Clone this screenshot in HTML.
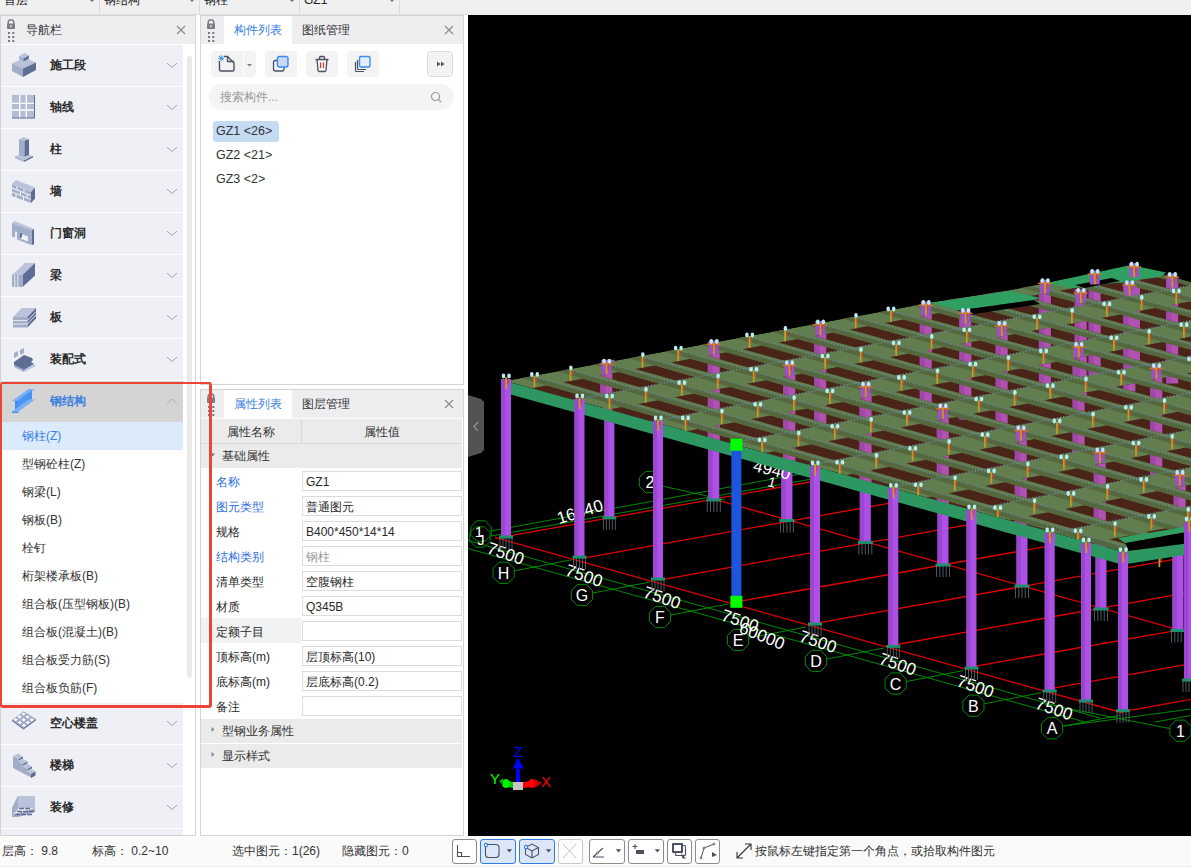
<!DOCTYPE html><html><head><meta charset="utf-8"><style>
*{box-sizing:border-box;margin:0;padding:0}
html,body{width:1191px;height:867px;overflow:hidden;background:#f0f0f0;font-family:"Liberation Sans",sans-serif;font-size:12px;color:#333}
div,span,svg{position:absolute}
.t{white-space:nowrap;line-height:14px}
.b{font-weight:bold}
</style></head><body>
<div style="left:0px;top:0px;width:468px;height:15px;background:#f0f0f0"></div>
<div style="left:99px;top:0px;width:1px;height:15px;background:#d9d9d9"></div>
<span class="t" style="left:4px;top:-7px;color:#222">首层</span>
<svg style="left:90px;top:0px" width="4" height="2"><path d="M0 0H4L2 2Z" fill="#777"/></svg>
<div style="left:199px;top:0px;width:1px;height:15px;background:#d9d9d9"></div>
<span class="t" style="left:104px;top:-7px;color:#222">钢结构</span>
<svg style="left:190px;top:0px" width="4" height="2"><path d="M0 0H4L2 2Z" fill="#777"/></svg>
<div style="left:299px;top:0px;width:1px;height:15px;background:#d9d9d9"></div>
<span class="t" style="left:204px;top:-7px;color:#222">钢柱</span>
<svg style="left:290px;top:0px" width="4" height="2"><path d="M0 0H4L2 2Z" fill="#777"/></svg>
<div style="left:399px;top:0px;width:1px;height:15px;background:#d9d9d9"></div>
<span class="t" style="left:304px;top:-7px;color:#222">GZ1</span>
<svg style="left:390px;top:0px" width="4" height="2"><path d="M0 0H4L2 2Z" fill="#777"/></svg>
<div style="left:0px;top:14px;width:468px;height:1px;background:#e0e0e0"></div>
<div style="left:0px;top:15px;width:468px;height:821px;background:#fff"></div>
<div style="left:0px;top:15px;width:196px;height:821px;background:#fff;border:1px solid #d4d4d4"></div>
<div style="left:1px;top:16px;width:194px;height:28px;background:#eeeef1"></div>
<svg style="left:6px;top:19px" width="10" height="24"><path d="M2.2 5V3.6A2.8 2.8 0 0 1 7.8 3.6V5" fill="none" stroke="#7d7f86" stroke-width="1.5"/><rect x="1" y="4.6" width="8" height="5.4" rx="0.8" fill="#7d7f86"/><rect x="4.2" y="6.4" width="1.6" height="1.6" fill="#eee"/><rect x="2" y="13" width="2" height="2" fill="#77797f"/><rect x="2" y="17" width="2" height="2" fill="#77797f"/><rect x="2" y="21" width="2" height="2" fill="#77797f"/><rect x="6.3" y="13" width="2" height="2" fill="#77797f"/><rect x="6.3" y="17" width="2" height="2" fill="#77797f"/><rect x="6.3" y="21" width="2" height="2" fill="#77797f"/></svg>
<span class="t" style="left:26px;top:23px;color:#333">导航栏</span>
<svg style="left:176px;top:25px" width="10" height="10"><path d="M1 1L9 9M9 1L1 9" stroke="#8a8a8a" stroke-width="1.1"/></svg>
<div style="left:187px;top:56px;width:5px;height:622px;background:#ebebeb;border-radius:3px"></div>
<div style="left:1px;top:45px;width:182px;height:41px;background:#eff0f5"></div>
<svg style="left:11px;top:53px" width="26" height="26"><path d="M1 10.5 L13.5 4.5 L25 9.5 L12 15.5Z" fill="#bac3d9"/><path d="M1 10.5 L12 15.5 L12 24 L1 18Z" fill="#a2adc8"/><path d="M12 15.5 L25 9.5 L25 17 L12 24Z" fill="#5e6d94"/><path d="M8 3 L13.5 0 L18 2.5 L12.5 5.5Z" fill="#bac3d9"/><path d="M8 3 L12.5 5.5 L12.5 8.5 L8 6Z" fill="#a2adc8"/><path d="M12.5 5.5 L18 2.5 L18 5.5 L12.5 8.5Z" fill="#5e6d94"/></svg>
<span class="t" style="left:50px;top:58px;font-weight:bold;color:#2b2b2b">施工段</span>
<svg style="left:167px;top:63px" width="11" height="6"><path d="M0 0L5 4.5L10 0" fill="none" stroke="#9aa2bb" stroke-width="1"/></svg>
<div style="left:1px;top:87px;width:182px;height:41px;background:#eff0f5"></div>
<svg style="left:11px;top:95px" width="26" height="26"><rect x="1" y="0" width="23" height="23.5" fill="#5e6d94"/><rect x="1" y="0" width="22" height="22.5" fill="#b4bdd4"/><path d="M8.7 0V22.5M15.3 0V22.5M1 8.3H23M1 15H23" stroke="#fff" stroke-width="1.3"/></svg>
<span class="t" style="left:50px;top:100px;font-weight:bold;color:#2b2b2b">轴线</span>
<svg style="left:167px;top:105px" width="11" height="6"><path d="M0 0L5 4.5L10 0" fill="none" stroke="#9aa2bb" stroke-width="1"/></svg>
<div style="left:1px;top:129px;width:182px;height:41px;background:#eff0f5"></div>
<svg style="left:11px;top:137px" width="26" height="26"><path d="M4 19.5 L13 15.5 L22 19 L13 23.5Z" fill="#bac3d9"/><path d="M4 19.5 L13 23.5 L13 25 L4 21Z" fill="#a2adc8"/><path d="M13 23.5 L22 19 L22 20.5 L13 25Z" fill="#5e6d94"/><path d="M8 2 L13.5 3.5 L13.5 19.5 L8 18Z" fill="#a2adc8"/><path d="M13.5 3.5 L18 2 L18 18 L13.5 19.5Z" fill="#5e6d94"/><path d="M8 2 L12.5 0 L18 2 L13.5 3.5Z" fill="#bac3d9"/></svg>
<span class="t" style="left:50px;top:142px;font-weight:bold;color:#2b2b2b">柱</span>
<svg style="left:167px;top:147px" width="11" height="6"><path d="M0 0L5 4.5L10 0" fill="none" stroke="#9aa2bb" stroke-width="1"/></svg>
<div style="left:1px;top:171px;width:182px;height:41px;background:#eff0f5"></div>
<svg style="left:11px;top:179px" width="26" height="26"><path d="M1 5 L20 13 L20 24 L1 17Z" fill="#a2adc8"/><path d="M1 5 L5 1 L24 8.5 L20 13Z" fill="#bac3d9"/><path d="M20 13 L24 8.5 L24 19.5 L20 24Z" fill="#5e6d94"/><path d="M1 9L20 16.5M1 13L20 20.5M6 7V11M13 10V14M9.5 12.5V16.5M16 15V19M5 15V19M12.5 18V22" stroke="#fff" stroke-width="0.9"/></svg>
<span class="t" style="left:50px;top:184px;font-weight:bold;color:#2b2b2b">墙</span>
<svg style="left:167px;top:189px" width="11" height="6"><path d="M0 0L5 4.5L10 0" fill="none" stroke="#9aa2bb" stroke-width="1"/></svg>
<div style="left:1px;top:213px;width:182px;height:41px;background:#eff0f5"></div>
<svg style="left:11px;top:221px" width="26" height="26"><path d="M1 2 L3.5 0 L23 8 L20.5 9.5Z" fill="#bac3d9"/><path d="M20.5 9.5 L23 8 L23 23.5 L20.5 24Z" fill="#5e6d94"/><path d="M1 2L20.5 9.5V24L6 18.5V11L4 10.2V16.5L1 15.5Z M9 12.5V17.5L17 20.5V15.5Z" fill="#a2adc8" fill-rule="evenodd"/><path d="M9 12.5 L11 12 L11 16 L9 17.5Z" fill="#5e6d94"/></svg>
<span class="t" style="left:50px;top:226px;font-weight:bold;color:#2b2b2b">门窗洞</span>
<svg style="left:167px;top:231px" width="11" height="6"><path d="M0 0L5 4.5L10 0" fill="none" stroke="#9aa2bb" stroke-width="1"/></svg>
<div style="left:1px;top:255px;width:182px;height:41px;background:#eff0f5"></div>
<svg style="left:11px;top:263px" width="26" height="26"><path d="M1 12 L14 0 L24 0 L11.5 12Z" fill="#bac3d9"/><path d="M11.5 12 L24 0 L24 12.5 L11.5 24Z" fill="#5e6d94"/><path d="M1 12 L11.5 12 L11.5 24 L1 24Z" fill="#a2adc8"/><path d="M3.8 12V24M6.8 12V24" stroke="#eef0f6" stroke-width="0.9"/></svg>
<span class="t" style="left:50px;top:268px;font-weight:bold;color:#2b2b2b">梁</span>
<svg style="left:167px;top:273px" width="11" height="6"><path d="M0 0L5 4.5L10 0" fill="none" stroke="#9aa2bb" stroke-width="1"/></svg>
<div style="left:1px;top:297px;width:182px;height:41px;background:#eff0f5"></div>
<svg style="left:11px;top:305px" width="26" height="26"><path d="M2 12 L10.6 3 L25 3 L16.4 12Z" fill="#bac3d9"/><path d="M16.4 12 L25 3 L25 13.5 L16.4 22.5Z" fill="#5e6d94"/><path d="M2 12 L16.4 12 L16.4 22.5 L2 22.5Z" fill="#a2adc8"/><path d="M2 15.6H16.4L25 6.6M2 19H16.4L25 10" fill="none" stroke="#eef0f6" stroke-width="0.9"/></svg>
<span class="t" style="left:50px;top:310px;font-weight:bold;color:#2b2b2b">板</span>
<svg style="left:167px;top:315px" width="11" height="6"><path d="M0 0L5 4.5L10 0" fill="none" stroke="#9aa2bb" stroke-width="1"/></svg>
<div style="left:1px;top:339px;width:182px;height:41px;background:#eff0f5"></div>
<svg style="left:11px;top:347px" width="26" height="26"><path d="M3 6 L7 4 L7 9 L3 11Z" fill="#a2adc8"/><path d="M9 3 L13 1 L13 6 L9 8Z" fill="#a2adc8"/><path d="M3 15 L13 8 L21 11 L22 13 L20 15 L23 17 L13 23 L3 18Z" fill="#5e6d94"/><path d="M3 18 L13 23 L13 25 L3 20Z" fill="#a2adc8"/><path d="M13 23 L24 17 L24 19.5 L13 25Z" fill="#bac3d9"/></svg>
<span class="t" style="left:50px;top:352px;font-weight:bold;color:#2b2b2b">装配式</span>
<svg style="left:167px;top:357px" width="11" height="6"><path d="M0 0L5 4.5L10 0" fill="none" stroke="#9aa2bb" stroke-width="1"/></svg>
<div style="left:1px;top:381px;width:182px;height:41px;background:#d4d4d4"></div>
<svg style="left:11px;top:389px" width="26" height="26"><path d="M1 12 L17.5 0 L24 0 L7.5 12Z" fill="#78b0f5"/><path d="M4 12 L6 12 L6 21 L4 21Z" fill="#3d8cf0"/><path d="M6 12 L21 1 L21 10 L6 21Z" fill="#4a95f2"/><path d="M1 22.5 L17.5 10.5 L24 10.5 L7.5 22.5Z" fill="#78b0f5"/><path d="M1 22.5 L7.5 22.5 L7.5 24 L1 24Z" fill="#3d8cf0"/></svg>
<span class="t" style="left:50px;top:394px;font-weight:bold;color:#3d7fe0">钢结构</span>
<svg style="left:167px;top:399px" width="11" height="6"><path d="M0 4.5L5 0L10 4.5" fill="none" stroke="#a9afbf" stroke-width="1"/></svg>
<div style="left:1px;top:422px;width:182px;height:28px;background:#dcebfc"></div>
<span class="t" style="left:22px;top:429px;color:#3b7fe0">钢柱(Z)</span>
<span class="t" style="left:22px;top:457px;color:#333">型钢砼柱(Z)</span>
<span class="t" style="left:22px;top:485px;color:#333">钢梁(L)</span>
<span class="t" style="left:22px;top:513px;color:#333">钢板(B)</span>
<span class="t" style="left:22px;top:541px;color:#333">栓钉</span>
<span class="t" style="left:22px;top:569px;color:#333">桁架楼承板(B)</span>
<span class="t" style="left:22px;top:597px;color:#333">组合板(压型钢板)(B)</span>
<span class="t" style="left:22px;top:625px;color:#333">组合板(混凝土)(B)</span>
<span class="t" style="left:22px;top:653px;color:#333">组合板受力筋(S)</span>
<span class="t" style="left:22px;top:681px;color:#333">组合板负筋(F)</span>
<div style="left:1px;top:703px;width:182px;height:41px;background:#eff0f5"></div>
<svg style="left:11px;top:711px" width="26" height="26"><path d="M1 8.7 L12.7 0.3 L25.1 7.9 L12.5 17.1Z" fill="#a2adc8"/><path d="M1 8.7 L12.5 17.1 L12.5 18.5 L1 10Z" fill="#5e6d94"/><path d="M12.5 17.1 L25.1 7.9 L25.1 9.3 L12.5 18.5Z" fill="#5e6d94"/><path d="M2.499999999999999 8.6 L4.699999999999999 7.0 L6.8999999999999995 8.6 L4.699999999999999 10.2Z" fill="#fff"/><path d="M6.599999999999999 11.5 L8.799999999999999 9.9 L11.0 11.5 L8.799999999999999 13.1Z" fill="#fff"/><path d="M10.7 14.4 L12.899999999999999 12.8 L15.099999999999998 14.4 L12.899999999999999 16.0Z" fill="#fff"/><path d="M6.3999999999999995 5.799999999999999 L8.6 4.199999999999999 L10.8 5.799999999999999 L8.6 7.399999999999999Z" fill="#fff"/><path d="M10.5 8.7 L12.7 7.1 L14.899999999999999 8.7 L12.7 10.299999999999999Z" fill="#fff"/><path d="M14.599999999999998 11.6 L16.799999999999997 10.0 L18.999999999999996 11.6 L16.799999999999997 13.2Z" fill="#fff"/><path d="M10.299999999999997 2.9999999999999996 L12.499999999999998 1.3999999999999995 L14.7 2.9999999999999996 L12.499999999999998 4.6Z" fill="#fff"/><path d="M14.399999999999999 5.8999999999999995 L16.599999999999998 4.299999999999999 L18.799999999999997 5.8999999999999995 L16.599999999999998 7.5Z" fill="#fff"/><path d="M18.499999999999996 8.799999999999999 L20.699999999999996 7.199999999999999 L22.899999999999995 8.799999999999999 L20.699999999999996 10.399999999999999Z" fill="#fff"/></svg>
<span class="t" style="left:50px;top:716px;font-weight:bold;color:#2b2b2b">空心楼盖</span>
<svg style="left:167px;top:721px" width="11" height="6"><path d="M0 0L5 4.5L10 0" fill="none" stroke="#9aa2bb" stroke-width="1"/></svg>
<div style="left:1px;top:745px;width:182px;height:41px;background:#eff0f5"></div>
<svg style="left:11px;top:753px" width="26" height="26"><path d="M2 3 L7.5 6 L7.5 8 L12 11 L12 13 L16.5 16 L16.5 18 L21 21 L21 25 L2 15Z" fill="#a2adc8"/><path d="M2.0 3 L7.0 0.5 L12.0 3.5 L7.5 6Z" fill="#bac3d9"/><path d="M7.5 6 L12.0 3.5 L12.0 5.5 L7.5 8Z" fill="#5e6d94"/><path d="M6.5 8 L11.5 5.5 L16.5 8.5 L12.0 11Z" fill="#bac3d9"/><path d="M12.0 11 L16.5 8.5 L16.5 10.5 L12.0 13Z" fill="#5e6d94"/><path d="M11.0 13 L16.0 10.5 L21.0 13.5 L16.5 16Z" fill="#bac3d9"/><path d="M16.5 16 L21.0 13.5 L21.0 15.5 L16.5 18Z" fill="#5e6d94"/><path d="M15.5 18 L20 15.5 L24.5 18.5 L20 21Z" fill="#bac3d9"/><path d="M20 21 L24.5 18.5 L24.5 22.5 L20 25Z" fill="#5e6d94"/></svg>
<span class="t" style="left:50px;top:758px;font-weight:bold;color:#2b2b2b">楼梯</span>
<svg style="left:167px;top:763px" width="11" height="6"><path d="M0 0L5 4.5L10 0" fill="none" stroke="#9aa2bb" stroke-width="1"/></svg>
<div style="left:1px;top:787px;width:182px;height:41px;background:#eff0f5"></div>
<svg style="left:11px;top:795px" width="26" height="26"><path d="M1 13 L7 1 L24 1 L24 13Z" fill="#bac3d9"/><path d="M1 13 L7 1 L7 14 L1 21Z" fill="#a2adc8"/><path d="M1 20 L24 13 L24 17 L7 22 L1 22Z" fill="#a2adc8"/><path d="M4 19.5H9M10 19.5H15M16 19.5H21M6 16.5H11M12 16.5H17M18 16.5H23M8 13.5H13M14 13.5H19" stroke="#5e6d94" stroke-width="1.5"/></svg>
<span class="t" style="left:50px;top:800px;font-weight:bold;color:#2b2b2b">装修</span>
<svg style="left:167px;top:805px" width="11" height="6"><path d="M0 0L5 4.5L10 0" fill="none" stroke="#9aa2bb" stroke-width="1"/></svg>
<div style="left:1px;top:829px;width:182px;height:6px;background:#eff0f5"></div>
<div style="left:200px;top:15px;width:264px;height:370px;background:#fff;border:1px solid #d4d4d4"></div>
<div style="left:201px;top:16px;width:262px;height:28px;background:#eeeef1"></div>
<div style="left:224px;top:16px;width:68px;height:28px;background:#fff"></div>
<svg style="left:206px;top:19px" width="10" height="24"><path d="M2.2 5V3.6A2.8 2.8 0 0 1 7.8 3.6V5" fill="none" stroke="#7d7f86" stroke-width="1.5"/><rect x="1" y="4.6" width="8" height="5.4" rx="0.8" fill="#7d7f86"/><rect x="4.2" y="6.4" width="1.6" height="1.6" fill="#eee"/><rect x="2" y="13" width="2" height="2" fill="#77797f"/><rect x="2" y="17" width="2" height="2" fill="#77797f"/><rect x="2" y="21" width="2" height="2" fill="#77797f"/><rect x="6.3" y="13" width="2" height="2" fill="#77797f"/><rect x="6.3" y="17" width="2" height="2" fill="#77797f"/><rect x="6.3" y="21" width="2" height="2" fill="#77797f"/></svg>
<span class="t" style="left:234px;top:23px;color:#3b7fe0">构件列表</span>
<span class="t" style="left:302px;top:23px;color:#333">图纸管理</span>
<svg style="left:444px;top:25px" width="10" height="10"><path d="M1 1L9 9M9 1L1 9" stroke="#8a8a8a" stroke-width="1.1"/></svg>
<div style="left:211px;top:51px;width:45px;height:26px;background:#f3f3f3;border-radius:4px;"></div>
<div style="left:243px;top:51px;width:1px;height:26px;background:#fff"></div>
<svg style="left:211px;top:51px" width="45" height="26"><path d="M8.5 5.5H16.5L23 12V18.5A1.5 1.5 0 0 1 21.5 20H10A1.5 1.5 0 0 1 8.5 18.5Z" fill="none" stroke="#4b5162" stroke-width="1.4"/><path d="M16.5 5.5V10.5H23" fill="none" stroke="#4b5162" stroke-width="1.3"/><rect x="7.5" y="4.5" width="5.5" height="5.5" fill="#fff"/><path d="M8 5L12.5 9.5M12.5 5L8 9.5M10.25 4.5V10M7.5 7.25H13" stroke="#3b8cf0" stroke-width="1"/><path d="M36 13L41 13L38.5 15.5Z" fill="#7a7a7a"/></svg>
<div style="left:265px;top:51px;width:32px;height:26px;background:#f3f3f3;border-radius:4px;"></div>
<svg style="left:265px;top:51px" width="32" height="26"><rect x="8.5" y="9.5" width="10.5" height="10.5" rx="2" fill="none" stroke="#4b5162" stroke-width="1.3"/><rect x="12.5" y="5.5" width="10.5" height="10.5" rx="2" fill="#c9daf5" stroke="#3b8cf0" stroke-width="1.4"/></svg>
<div style="left:306px;top:51px;width:32px;height:26px;background:#f3f3f3;border-radius:4px;"></div>
<svg style="left:306px;top:51px" width="32" height="26"><path d="M9.5 8.5H22.5M11 8.5L12 19.5A1.5 1.5 0 0 0 13.5 20.5H18.5A1.5 1.5 0 0 0 20 19.5L21 8.5M13.5 8.5V6.5A1.5 1.5 0 0 1 15 5.5H17A1.5 1.5 0 0 1 18.5 6.5V8.5" fill="none" stroke="#4b5162" stroke-width="1.3"/><path d="M14.5 11.5V17M17.5 11.5V17" stroke="#e0302a" stroke-width="1.2"/></svg>
<div style="left:347px;top:51px;width:32px;height:26px;background:#f3f3f3;border-radius:4px;"></div>
<svg style="left:347px;top:51px" width="32" height="26"><path d="M8.5 11V19.5A1 1 0 0 0 9.5 20.5H17" fill="none" stroke="#4b5162" stroke-width="1.2"/><path d="M10.5 9V17.5A1 1 0 0 0 11.5 18.5H19" fill="none" stroke="#4b5162" stroke-width="1.2"/><rect x="12.5" y="5.5" width="10.5" height="10.5" rx="1.5" fill="#e3eefc" stroke="#3b8cf0" stroke-width="1.4"/></svg>
<div style="left:427px;top:51px;width:26px;height:26px;background:#f3f3f3;border:1px solid #dcdcdc;border-radius:4px"></div>
<svg style="left:427px;top:51px" width="26" height="26"><path d="M10 10.5L13.5 13L10 15.5ZM14 10.5L17.5 13L14 15.5Z" fill="#4b5162"/></svg>
<div style="left:209px;top:84px;width:245px;height:26px;background:#f4f4f4;border-radius:13px"></div>
<span class="t" style="left:220px;top:90px;color:#9a9a9a">搜索构件...</span>
<svg style="left:430px;top:91px" width="13" height="13"><circle cx="5.5" cy="5.5" r="4" fill="none" stroke="#9a9a9a" stroke-width="1.2"/><path d="M8.5 8.5L11 11" stroke="#9a9a9a" stroke-width="1.2"/></svg>
<div style="left:213px;top:121px;width:66px;height:21px;background:#c5daf3;border-radius:3px"></div>
<span class="t" style="left:216px;top:124px;color:#333;font-size:12.5px">GZ1 &lt;26&gt;</span>
<span class="t" style="left:216px;top:148px;color:#333;font-size:12.5px">GZ2 &lt;21&gt;</span>
<span class="t" style="left:216px;top:172px;color:#333;font-size:12.5px">GZ3 &lt;2&gt;</span>
<div style="left:200px;top:389px;width:264px;height:447px;background:#fff;border:1px solid #d4d4d4"></div>
<div style="left:201px;top:390px;width:262px;height:28px;background:#eeeef1"></div>
<div style="left:224px;top:390px;width:68px;height:28px;background:#fff"></div>
<svg style="left:206px;top:393px" width="10" height="24"><path d="M2.2 5V3.6A2.8 2.8 0 0 1 7.8 3.6V5" fill="none" stroke="#7d7f86" stroke-width="1.5"/><rect x="1" y="4.6" width="8" height="5.4" rx="0.8" fill="#7d7f86"/><rect x="4.2" y="6.4" width="1.6" height="1.6" fill="#eee"/><rect x="2" y="13" width="2" height="2" fill="#77797f"/><rect x="2" y="17" width="2" height="2" fill="#77797f"/><rect x="2" y="21" width="2" height="2" fill="#77797f"/><rect x="6.3" y="13" width="2" height="2" fill="#77797f"/><rect x="6.3" y="17" width="2" height="2" fill="#77797f"/><rect x="6.3" y="21" width="2" height="2" fill="#77797f"/></svg>
<span class="t" style="left:234px;top:397px;color:#3b7fe0">属性列表</span>
<span class="t" style="left:302px;top:397px;color:#333">图层管理</span>
<svg style="left:444px;top:399px" width="10" height="10"><path d="M1 1L9 9M9 1L1 9" stroke="#8a8a8a" stroke-width="1.1"/></svg>
<div style="left:201px;top:419px;width:261px;height:24px;background:#ebebeb"></div>
<div style="left:301px;top:419px;width:1px;height:24px;background:#d8d8d8"></div>
<div style="left:201px;top:443px;width:261px;height:1px;background:#d8d8d8"></div>
<span class="t" style="left:227px;top:425px;color:#333">属性名称</span>
<span class="t" style="left:364px;top:425px;color:#333">属性值</span>
<div style="left:201px;top:444px;width:261px;height:24px;background:#ebebeb"></div>
<svg style="left:209px;top:452px" width="7" height="6"><path d="M1 1.5H6L3.5 4.5Z" fill="#777"/></svg>
<span class="t" style="left:222px;top:449px;color:#333">基础属性</span>
<span class="t" style="left:216px;top:475px;color:#2f6fe3">名称</span>
<div style="left:302px;top:471px;width:160px;height:20px;background:#fff;border:1px solid #dcdcdc"></div>
<span class="t" style="left:306px;top:475px;color:#2a2a2a">GZ1</span>
<span class="t" style="left:216px;top:500px;color:#2f6fe3">图元类型</span>
<div style="left:302px;top:496px;width:160px;height:20px;background:#fff;border:1px solid #dcdcdc"></div>
<span class="t" style="left:306px;top:500px;color:#2a2a2a">普通图元</span>
<span class="t" style="left:216px;top:525px;color:#2a2a2a">规格</span>
<div style="left:302px;top:521px;width:160px;height:20px;background:#fff;border:1px solid #dcdcdc"></div>
<span class="t" style="left:306px;top:525px;color:#2a2a2a">B400*450*14*14</span>
<span class="t" style="left:216px;top:550px;color:#2f6fe3">结构类别</span>
<div style="left:302px;top:546px;width:160px;height:20px;background:#fff;border:1px solid #dcdcdc"></div>
<span class="t" style="left:306px;top:550px;color:#9a9a9a">钢柱</span>
<span class="t" style="left:216px;top:575px;color:#2a2a2a">清单类型</span>
<div style="left:302px;top:571px;width:160px;height:20px;background:#fff;border:1px solid #dcdcdc"></div>
<span class="t" style="left:306px;top:575px;color:#2a2a2a">空腹钢柱</span>
<span class="t" style="left:216px;top:600px;color:#2a2a2a">材质</span>
<div style="left:302px;top:596px;width:160px;height:20px;background:#fff;border:1px solid #dcdcdc"></div>
<span class="t" style="left:306px;top:600px;color:#2a2a2a">Q345B</span>
<div style="left:201px;top:618px;width:100px;height:25px;background:#f2f2f2"></div>
<span class="t" style="left:216px;top:625px;color:#2a2a2a">定额子目</span>
<div style="left:302px;top:621px;width:160px;height:20px;background:#fff;border:1px solid #dcdcdc"></div>
<span class="t" style="left:306px;top:625px;color:#2a2a2a"></span>
<span class="t" style="left:216px;top:650px;color:#2a2a2a">顶标高(m)</span>
<div style="left:302px;top:646px;width:160px;height:20px;background:#fff;border:1px solid #dcdcdc"></div>
<span class="t" style="left:306px;top:650px;color:#2a2a2a">层顶标高(10)</span>
<span class="t" style="left:216px;top:675px;color:#2a2a2a">底标高(m)</span>
<div style="left:302px;top:671px;width:160px;height:20px;background:#fff;border:1px solid #dcdcdc"></div>
<span class="t" style="left:306px;top:675px;color:#2a2a2a">层底标高(0.2)</span>
<span class="t" style="left:216px;top:700px;color:#2a2a2a">备注</span>
<div style="left:302px;top:696px;width:160px;height:20px;background:#fff;border:1px solid #dcdcdc"></div>
<span class="t" style="left:306px;top:700px;color:#2a2a2a"></span>
<div style="left:201px;top:719px;width:261px;height:24px;background:#ebebeb"></div>
<svg style="left:210px;top:726px" width="6" height="8"><path d="M1.5 1L4.5 3.5L1.5 6Z" fill="#888"/></svg>
<span class="t" style="left:222px;top:724px;color:#333">型钢业务属性</span>
<div style="left:201px;top:744px;width:261px;height:24px;background:#ebebeb"></div>
<svg style="left:210px;top:751px" width="6" height="8"><path d="M1.5 1L4.5 3.5L1.5 6Z" fill="#888"/></svg>
<span class="t" style="left:222px;top:749px;color:#333">显示样式</span>
<div style="left:468px;top:15px;width:723px;height:821px;background:#000"></div>
<svg style="left:468px;top:15px" width="723" height="821" viewBox="468 15 723 821"><rect x="468" y="15" width="723" height="821" fill="#000"/><line x1="495.0" y1="537.5" x2="1123.0" y2="713.0" stroke="#e00000" stroke-width="1.3" /><line x1="713.8" y1="499.1" x2="1381.6" y2="687.0" stroke="#e00000" stroke-width="1.3" /><line x1="505.1" y1="536.6" x2="1132.7" y2="424.0" stroke="#e00000" stroke-width="1.3" /><line x1="582.1" y1="558.3" x2="1210.5" y2="445.7" stroke="#e00000" stroke-width="1.3" /><line x1="659.2" y1="580.1" x2="1288.3" y2="467.5" stroke="#e00000" stroke-width="1.3" /><line x1="736.4" y1="601.8" x2="1366.3" y2="489.3" stroke="#e00000" stroke-width="1.3" /><line x1="813.8" y1="623.7" x2="1444.3" y2="511.1" stroke="#e00000" stroke-width="1.3" /><line x1="891.2" y1="645.5" x2="1522.5" y2="533.0" stroke="#e00000" stroke-width="1.3" /><line x1="968.7" y1="667.4" x2="1600.8" y2="554.9" stroke="#e00000" stroke-width="1.3" /><line x1="1046.4" y1="689.3" x2="1679.2" y2="576.8" stroke="#e00000" stroke-width="1.3" /><line x1="1124.1" y1="711.3" x2="1757.7" y2="598.7" stroke="#e00000" stroke-width="1.3" /><line x1="468.0" y1="540.5" x2="1100.0" y2="718.1" stroke="#008a00" stroke-width="1" /><line x1="468.0" y1="548.5" x2="1085.0" y2="722.0" stroke="#008a00" stroke-width="1" /><line x1="1040.0" y1="703.0" x2="1169.6" y2="728.5" stroke="#008a00" stroke-width="1" /><line x1="1064.0" y1="726.0" x2="1191.0" y2="709.0" stroke="#008a00" stroke-width="1" /><line x1="1155.0" y1="722.0" x2="1191.0" y2="715.5" stroke="#008a00" stroke-width="1" /><line x1="514.6" y1="570.8" x2="571.6" y2="559.8" stroke="#008a00" stroke-width="1" /><polygon points="514.2,577.2 508.0,583.4 499.2,583.4 493.0,577.2 493.0,568.4 499.2,562.2 508.0,562.2 514.2,568.4" fill="none" stroke="#008a00" stroke-width="1"/><text x="503.6" y="573.3" fill="#fff" font-size="16" text-anchor="middle" dominant-baseline="central" font-family="Liberation Sans, sans-serif">H</text><text x="505.6" y="553.8" fill="#fff" font-size="17" text-anchor="middle" dominant-baseline="central" font-family="Liberation Sans, sans-serif" transform="rotate(19 505.6 553.8)">7500</text><line x1="593.0" y1="593.0" x2="650.0" y2="582.0" stroke="#008a00" stroke-width="1" /><polygon points="592.6,599.4 586.4,605.6 577.6,605.6 571.4,599.4 571.4,590.6 577.6,584.4 586.4,584.4 592.6,590.6" fill="none" stroke="#008a00" stroke-width="1"/><text x="582.0" y="595.5" fill="#fff" font-size="16" text-anchor="middle" dominant-baseline="central" font-family="Liberation Sans, sans-serif">G</text><text x="584.0" y="576.0" fill="#fff" font-size="17" text-anchor="middle" dominant-baseline="central" font-family="Liberation Sans, sans-serif" transform="rotate(19 584.0 576.0)">7500</text><line x1="671.0" y1="615.0" x2="728.0" y2="604.0" stroke="#008a00" stroke-width="1" /><polygon points="670.6,621.4 664.4,627.6 655.6,627.6 649.4,621.4 649.4,612.6 655.6,606.4 664.4,606.4 670.6,612.6" fill="none" stroke="#008a00" stroke-width="1"/><text x="660.0" y="617.5" fill="#fff" font-size="16" text-anchor="middle" dominant-baseline="central" font-family="Liberation Sans, sans-serif">F</text><text x="662.0" y="598.0" fill="#fff" font-size="17" text-anchor="middle" dominant-baseline="central" font-family="Liberation Sans, sans-serif" transform="rotate(19 662.0 598.0)">7500</text><line x1="749.0" y1="638.0" x2="806.0" y2="627.0" stroke="#008a00" stroke-width="1" /><polygon points="748.6,644.4 742.4,650.6 733.6,650.6 727.4,644.4 727.4,635.6 733.6,629.4 742.4,629.4 748.6,635.6" fill="none" stroke="#008a00" stroke-width="1"/><text x="738.0" y="640.5" fill="#fff" font-size="16" text-anchor="middle" dominant-baseline="central" font-family="Liberation Sans, sans-serif">E</text><text x="740.0" y="621.0" fill="#fff" font-size="17" text-anchor="middle" dominant-baseline="central" font-family="Liberation Sans, sans-serif" transform="rotate(19 740.0 621.0)">7500</text><line x1="827.0" y1="659.0" x2="884.0" y2="648.0" stroke="#008a00" stroke-width="1" /><polygon points="826.6,665.4 820.4,671.6 811.6,671.6 805.4,665.4 805.4,656.6 811.6,650.4 820.4,650.4 826.6,656.6" fill="none" stroke="#008a00" stroke-width="1"/><text x="816.0" y="661.5" fill="#fff" font-size="16" text-anchor="middle" dominant-baseline="central" font-family="Liberation Sans, sans-serif">D</text><text x="818.0" y="642.0" fill="#fff" font-size="17" text-anchor="middle" dominant-baseline="central" font-family="Liberation Sans, sans-serif" transform="rotate(19 818.0 642.0)">7500</text><line x1="906.6" y1="681.5" x2="963.6" y2="670.5" stroke="#008a00" stroke-width="1" /><polygon points="906.2,687.9 900.0,694.1 891.2,694.1 885.0,687.9 885.0,679.1 891.2,672.9 900.0,672.9 906.2,679.1" fill="none" stroke="#008a00" stroke-width="1"/><text x="895.6" y="684.0" fill="#fff" font-size="16" text-anchor="middle" dominant-baseline="central" font-family="Liberation Sans, sans-serif">C</text><text x="897.6" y="664.5" fill="#fff" font-size="17" text-anchor="middle" dominant-baseline="central" font-family="Liberation Sans, sans-serif" transform="rotate(19 897.6 664.5)">7500</text><line x1="984.4" y1="703.7" x2="1041.4" y2="692.7" stroke="#008a00" stroke-width="1" /><polygon points="984.0,710.1 977.8,716.3 969.0,716.3 962.8,710.1 962.8,701.3 969.0,695.1 977.8,695.1 984.0,701.3" fill="none" stroke="#008a00" stroke-width="1"/><text x="973.4" y="706.2" fill="#fff" font-size="16" text-anchor="middle" dominant-baseline="central" font-family="Liberation Sans, sans-serif">B</text><text x="975.4" y="686.7" fill="#fff" font-size="17" text-anchor="middle" dominant-baseline="central" font-family="Liberation Sans, sans-serif" transform="rotate(19 975.4 686.7)">7500</text><line x1="1063.0" y1="726.2" x2="1120.0" y2="715.2" stroke="#008a00" stroke-width="1" /><polygon points="1062.6,732.6 1056.4,738.8 1047.6,738.8 1041.4,732.6 1041.4,723.8 1047.6,717.6 1056.4,717.6 1062.6,723.8" fill="none" stroke="#008a00" stroke-width="1"/><text x="1052.0" y="728.7" fill="#fff" font-size="16" text-anchor="middle" dominant-baseline="central" font-family="Liberation Sans, sans-serif">A</text><text x="1054.0" y="709.2" fill="#fff" font-size="17" text-anchor="middle" dominant-baseline="central" font-family="Liberation Sans, sans-serif" transform="rotate(19 1054.0 709.2)">7500</text><polygon points="490.2,541.2 484.2,547.2 475.8,547.2 469.8,541.2 469.8,532.8 475.8,526.8 484.2,526.8 490.2,532.8" fill="none" stroke="#008a00" stroke-width="1"/><polygon points="491.2,535.2 485.2,541.2 476.8,541.2 470.8,535.2 470.8,526.8 476.8,520.8 485.2,520.8 491.2,526.8" fill="none" stroke="#008a00" stroke-width="1"/><text x="479.0" y="531.0" fill="#fff" font-size="15" text-anchor="middle" dominant-baseline="central" font-family="Liberation Sans, sans-serif">1</text><text x="481.0" y="540.0" fill="#fff" font-size="14" text-anchor="middle" dominant-baseline="central" font-family="Liberation Sans, sans-serif">J</text><line x1="491.0" y1="531.0" x2="930.0" y2="450.0" stroke="#008a00" stroke-width="1" /><line x1="491.0" y1="536.0" x2="930.0" y2="458.0" stroke="#008a00" stroke-width="1" /><polygon points="660.6,486.4 654.4,492.6 645.6,492.6 639.4,486.4 639.4,477.6 645.6,471.4 654.4,471.4 660.6,477.6" fill="none" stroke="#008a00" stroke-width="1"/><text x="650.0" y="482.5" fill="#fff" font-size="16" text-anchor="middle" dominant-baseline="central" font-family="Liberation Sans, sans-serif">2</text><line x1="662.0" y1="486.0" x2="725.0" y2="500.0" stroke="#008a00" stroke-width="1" /><text x="580.0" y="512.0" fill="#fff" font-size="17" text-anchor="middle" dominant-baseline="central" font-family="Liberation Sans, sans-serif" transform="rotate(-17 580.0 512.0)">16840</text><polygon points="1191.1,735.1 1184.9,741.3 1176.1,741.3 1169.9,735.1 1169.9,726.3 1176.1,720.1 1184.9,720.1 1191.1,726.3" fill="none" stroke="#008a00" stroke-width="1"/><text x="1180.5" y="731.2" fill="#fff" font-size="16" text-anchor="middle" dominant-baseline="central" font-family="Liberation Sans, sans-serif">1</text><rect x="604.4" y="359.8" width="10" height="158.0" fill="#ad50e6"/><rect x="604.4" y="359.8" width="4.0" height="158.0" fill="#9b46cf"/><line x1="603.4" y1="517.8" x2="603.4" y2="529.8" stroke="#56626c" stroke-width="0.9" /><line x1="606.4" y1="517.8" x2="606.4" y2="529.8" stroke="#56626c" stroke-width="0.9" /><line x1="609.4" y1="517.8" x2="609.4" y2="529.8" stroke="#56626c" stroke-width="0.9" /><line x1="612.4" y1="517.8" x2="612.4" y2="529.8" stroke="#56626c" stroke-width="0.9" /><line x1="615.4" y1="517.8" x2="615.4" y2="529.8" stroke="#56626c" stroke-width="0.9" /><rect x="602.4" y="516.3" width="14" height="3" fill="#1f8f70"/><rect x="708.3" y="342.0" width="11" height="158.0" fill="#ad50e6"/><rect x="708.3" y="342.0" width="4.4" height="158.0" fill="#9b46cf"/><line x1="707.3" y1="500.0" x2="707.3" y2="512.0" stroke="#56626c" stroke-width="0.9" /><line x1="710.5" y1="500.0" x2="710.5" y2="512.0" stroke="#56626c" stroke-width="0.9" /><line x1="713.8" y1="500.0" x2="713.8" y2="512.0" stroke="#56626c" stroke-width="0.9" /><line x1="717.0" y1="500.0" x2="717.0" y2="512.0" stroke="#56626c" stroke-width="0.9" /><line x1="720.3" y1="500.0" x2="720.3" y2="512.0" stroke="#56626c" stroke-width="0.9" /><rect x="706.3" y="498.5" width="15" height="3" fill="#1f8f70"/><rect x="781.4" y="362.5" width="11" height="158.0" fill="#ad50e6"/><rect x="781.4" y="362.5" width="4.4" height="158.0" fill="#9b46cf"/><line x1="780.4" y1="520.5" x2="780.4" y2="532.5" stroke="#56626c" stroke-width="0.9" /><line x1="783.6" y1="520.5" x2="783.6" y2="532.5" stroke="#56626c" stroke-width="0.9" /><line x1="786.9" y1="520.5" x2="786.9" y2="532.5" stroke="#56626c" stroke-width="0.9" /><line x1="790.1" y1="520.5" x2="790.1" y2="532.5" stroke="#56626c" stroke-width="0.9" /><line x1="793.4" y1="520.5" x2="793.4" y2="532.5" stroke="#56626c" stroke-width="0.9" /><rect x="779.4" y="519.0" width="15" height="3" fill="#1f8f70"/><rect x="859.8" y="384.4" width="11" height="158.0" fill="#ad50e6"/><rect x="859.8" y="384.4" width="4.4" height="158.0" fill="#9b46cf"/><line x1="858.8" y1="542.4" x2="858.8" y2="554.4" stroke="#56626c" stroke-width="0.9" /><line x1="862.0" y1="542.4" x2="862.0" y2="554.4" stroke="#56626c" stroke-width="0.9" /><line x1="865.3" y1="542.4" x2="865.3" y2="554.4" stroke="#56626c" stroke-width="0.9" /><line x1="868.5" y1="542.4" x2="868.5" y2="554.4" stroke="#56626c" stroke-width="0.9" /><line x1="871.8" y1="542.4" x2="871.8" y2="554.4" stroke="#56626c" stroke-width="0.9" /><rect x="857.8" y="540.9" width="15" height="3" fill="#1f8f70"/><rect x="937.5" y="407.0" width="11" height="158.0" fill="#ad50e6"/><rect x="937.5" y="407.0" width="4.4" height="158.0" fill="#9b46cf"/><line x1="936.5" y1="565.0" x2="936.5" y2="577.0" stroke="#56626c" stroke-width="0.9" /><line x1="939.8" y1="565.0" x2="939.8" y2="577.0" stroke="#56626c" stroke-width="0.9" /><line x1="943.0" y1="565.0" x2="943.0" y2="577.0" stroke="#56626c" stroke-width="0.9" /><line x1="946.2" y1="565.0" x2="946.2" y2="577.0" stroke="#56626c" stroke-width="0.9" /><line x1="949.5" y1="565.0" x2="949.5" y2="577.0" stroke="#56626c" stroke-width="0.9" /><rect x="935.5" y="563.5" width="15" height="3" fill="#1f8f70"/><rect x="1016.5" y="428.0" width="11" height="158.0" fill="#ad50e6"/><rect x="1016.5" y="428.0" width="4.4" height="158.0" fill="#9b46cf"/><line x1="1015.5" y1="586.0" x2="1015.5" y2="598.0" stroke="#56626c" stroke-width="0.9" /><line x1="1018.8" y1="586.0" x2="1018.8" y2="598.0" stroke="#56626c" stroke-width="0.9" /><line x1="1022.0" y1="586.0" x2="1022.0" y2="598.0" stroke="#56626c" stroke-width="0.9" /><line x1="1025.2" y1="586.0" x2="1025.2" y2="598.0" stroke="#56626c" stroke-width="0.9" /><line x1="1028.5" y1="586.0" x2="1028.5" y2="598.0" stroke="#56626c" stroke-width="0.9" /><rect x="1014.5" y="584.5" width="15" height="3" fill="#1f8f70"/><rect x="1095.5" y="451.0" width="11" height="158.0" fill="#ad50e6"/><rect x="1095.5" y="451.0" width="4.4" height="158.0" fill="#9b46cf"/><line x1="1094.5" y1="609.0" x2="1094.5" y2="621.0" stroke="#56626c" stroke-width="0.9" /><line x1="1097.8" y1="609.0" x2="1097.8" y2="621.0" stroke="#56626c" stroke-width="0.9" /><line x1="1101.0" y1="609.0" x2="1101.0" y2="621.0" stroke="#56626c" stroke-width="0.9" /><line x1="1104.2" y1="609.0" x2="1104.2" y2="621.0" stroke="#56626c" stroke-width="0.9" /><line x1="1107.5" y1="609.0" x2="1107.5" y2="621.0" stroke="#56626c" stroke-width="0.9" /><rect x="1093.5" y="607.5" width="15" height="3" fill="#1f8f70"/><rect x="1172.5" y="472.5" width="11" height="158.0" fill="#ad50e6"/><rect x="1172.5" y="472.5" width="4.4" height="158.0" fill="#9b46cf"/><line x1="1171.5" y1="630.5" x2="1171.5" y2="642.5" stroke="#56626c" stroke-width="0.9" /><line x1="1174.8" y1="630.5" x2="1174.8" y2="642.5" stroke="#56626c" stroke-width="0.9" /><line x1="1178.0" y1="630.5" x2="1178.0" y2="642.5" stroke="#56626c" stroke-width="0.9" /><line x1="1181.2" y1="630.5" x2="1181.2" y2="642.5" stroke="#56626c" stroke-width="0.9" /><line x1="1184.5" y1="630.5" x2="1184.5" y2="642.5" stroke="#56626c" stroke-width="0.9" /><rect x="1170.5" y="629.0" width="15" height="3" fill="#1f8f70"/><text x="772.0" y="470.0" fill="#fff" font-size="17" text-anchor="middle" dominant-baseline="central" font-family="Liberation Sans, sans-serif" transform="rotate(14 772.0 470.0)">4940</text><text x="772.0" y="482.0" fill="#fff" font-size="14" text-anchor="middle" dominant-baseline="central" font-family="Liberation Sans, sans-serif" transform="rotate(14 772.0 482.0)">1</text><text x="806.0" y="458.0" fill="#fff" font-size="16" text-anchor="middle" dominant-baseline="central" font-family="Liberation Sans, sans-serif" transform="rotate(20 806.0 458.0)">2</text><clipPath id="slabclip"><polygon points="505.0,381.0 931.0,302.5 1010.5,290.0 1132.7,266.0 1757.7,440.7 1120.0,551.0"/></clipPath><clipPath id="holeclip"><polygon points="526.9,389.0 568.1,400.9 587.8,397.3 546.5,385.4"/><polygon points="602.1,410.7 643.8,422.8 663.5,419.1 621.7,407.1"/><polygon points="678.2,432.7 720.4,444.9 740.1,441.2 697.9,429.0"/><polygon points="755.2,454.9 797.9,467.3 817.7,463.5 774.9,451.2"/><polygon points="833.1,477.4 876.3,489.9 896.1,486.1 852.9,473.7"/><polygon points="911.8,500.2 955.6,512.8 975.5,509.0 931.7,496.4"/><polygon points="991.6,523.2 1035.8,536.0 1055.8,532.1 1011.5,519.4"/><polygon points="1072.2,546.5 1117.0,559.5 1137.0,555.6 1092.2,542.6"/><polygon points="563.1,382.3 604.4,394.2 624.0,390.6 582.7,378.7"/><polygon points="638.4,404.0 680.2,416.0 699.9,412.3 658.0,400.3"/><polygon points="714.6,425.9 756.9,438.0 776.6,434.3 734.3,422.2"/><polygon points="791.7,448.0 834.5,460.3 854.2,456.6 811.4,444.3"/><polygon points="869.7,470.5 913.0,482.9 932.7,479.1 889.4,466.7"/><polygon points="948.6,493.2 992.4,505.7 1012.2,501.9 968.4,489.4"/><polygon points="1028.4,516.1 1072.7,528.8 1092.6,525.0 1048.2,512.3"/><polygon points="1109.2,539.3 1154.0,552.2 1173.9,548.3 1129.1,535.4"/><polygon points="599.3,375.6 640.6,387.5 660.2,383.9 618.8,372.0"/><polygon points="674.7,397.2 716.5,409.2 736.1,405.6 694.2,393.6"/><polygon points="751.0,419.1 793.3,431.2 812.9,427.5 770.6,415.4"/><polygon points="828.2,441.2 871.0,453.4 890.6,449.7 847.8,437.4"/><polygon points="906.2,463.5 949.6,475.9 969.3,472.1 925.9,459.8"/><polygon points="985.2,486.1 1029.0,498.7 1048.8,494.9 1004.9,482.3"/><polygon points="1065.1,509.0 1109.5,521.7 1129.3,517.8 1084.9,505.2"/><polygon points="1146.0,532.1 1190.8,545.0 1210.7,541.1 1165.8,528.3"/><polygon points="635.3,369.0 676.7,380.8 696.2,377.2 654.7,365.4"/><polygon points="710.8,390.5 752.7,402.4 772.2,398.8 730.3,386.9"/><polygon points="787.2,412.3 829.6,424.4 849.2,420.7 806.7,408.6"/><polygon points="864.5,434.3 907.4,446.5 927.0,442.8 884.1,430.6"/><polygon points="942.6,456.6 986.0,468.9 1005.7,465.2 962.3,452.8"/><polygon points="1021.7,479.1 1065.6,491.6 1085.3,487.8 1041.4,475.3"/><polygon points="1101.7,501.9 1146.1,514.6 1165.9,510.7 1121.4,498.1"/><polygon points="1182.7,525.0 1227.6,537.8 1247.4,533.9 1202.4,521.1"/><polygon points="671.3,362.4 712.7,374.1 732.1,370.5 690.6,358.8"/><polygon points="746.9,383.8 788.8,395.7 808.3,392.1 766.3,380.2"/><polygon points="823.3,405.5 865.8,417.5 885.3,413.9 842.8,401.9"/><polygon points="900.7,427.5 943.6,439.6 963.2,435.9 920.2,423.8"/><polygon points="979.0,449.7 1022.4,462.0 1042.0,458.2 998.5,445.9"/><polygon points="1058.1,472.1 1102.0,484.6 1121.7,480.8 1077.7,468.3"/><polygon points="1138.2,494.8 1182.7,507.4 1202.3,503.6 1157.9,491.0"/><polygon points="1219.2,517.8 1264.2,530.6 1284.0,526.7 1238.9,514.0"/><polygon points="707.1,355.7 748.6,367.5 768.0,363.9 726.4,352.2"/><polygon points="782.8,377.1 824.8,389.0 844.2,385.4 802.2,373.5"/><polygon points="859.4,398.8 901.8,410.8 921.3,407.1 878.8,395.1"/><polygon points="936.8,420.6 979.8,432.8 999.3,429.1 956.3,417.0"/><polygon points="1015.2,442.8 1058.6,455.0 1078.2,451.3 1034.7,439.0"/><polygon points="1094.4,465.1 1138.4,477.6 1158.0,473.8 1114.0,461.4"/><polygon points="1174.6,487.8 1219.1,500.4 1238.7,496.5 1194.2,484.0"/><polygon points="1255.7,510.7 1300.7,523.4 1320.4,519.6 1275.4,506.9"/><polygon points="742.8,349.2 784.4,360.8 803.7,357.3 762.1,345.6"/><polygon points="818.6,370.5 860.7,382.3 880.0,378.7 837.9,366.9"/><polygon points="895.3,392.0 937.8,404.0 957.2,400.3 914.6,388.4"/><polygon points="972.8,413.8 1015.8,425.9 1035.3,422.2 992.2,410.2"/><polygon points="1051.2,435.9 1094.8,448.1 1114.2,444.4 1070.7,432.2"/><polygon points="1130.6,458.2 1174.6,470.6 1194.1,466.8 1150.1,454.5"/><polygon points="1210.9,480.8 1255.4,493.3 1275.0,489.5 1230.4,477.0"/><polygon points="1292.1,503.6 1337.1,516.3 1356.8,512.4 1311.6,499.8"/><polygon points="778.4,342.6 820.1,354.2 839.3,350.7 797.6,339.0"/><polygon points="854.3,363.8 896.4,375.6 915.7,372.0 873.6,360.2"/><polygon points="931.1,385.3 973.7,397.2 993.0,393.6 950.4,381.7"/><polygon points="1008.7,407.0 1051.8,419.1 1071.1,415.4 1028.0,403.4"/><polygon points="1087.2,429.0 1130.8,441.2 1150.2,437.5 1106.6,425.3"/><polygon points="1166.6,451.3 1210.7,463.6 1230.2,459.9 1186.1,447.5"/><polygon points="1247.0,473.8 1291.6,486.3 1311.1,482.5 1266.5,470.0"/><polygon points="1328.3,496.5 1373.4,509.2 1393.0,505.3 1347.8,492.7"/><polygon points="814.0,336.0 855.6,347.6 874.8,344.1 833.1,332.5"/><polygon points="889.9,357.2 932.1,369.0 951.3,365.4 909.1,353.6"/><polygon points="966.8,378.6 1009.4,390.5 1028.7,386.9 986.0,375.0"/><polygon points="1044.5,400.3 1087.6,412.3 1106.9,408.6 1063.8,396.6"/><polygon points="1123.1,422.2 1166.7,434.4 1186.1,430.6 1142.4,418.5"/><polygon points="1202.6,444.4 1246.7,456.7 1266.1,452.9 1222.0,440.6"/><polygon points="1283.1,466.8 1327.7,479.2 1347.1,475.4 1302.5,463.0"/><polygon points="1364.4,489.5 1409.6,502.1 1429.1,498.2 1383.9,485.7"/><polygon points="849.4,329.5 891.1,341.1 910.2,337.5 868.5,326.0"/><polygon points="925.4,350.6 967.6,362.3 986.8,358.7 944.6,347.0"/><polygon points="1002.4,371.9 1045.0,383.8 1064.2,380.2 1021.5,368.4"/><polygon points="1080.2,393.5 1123.3,405.5 1142.6,401.9 1099.4,389.9"/><polygon points="1158.9,415.4 1202.5,427.5 1221.8,423.8 1178.1,411.7"/><polygon points="1238.5,437.5 1282.6,449.7 1302.0,446.0 1257.8,433.8"/><polygon points="1319.0,459.8 1363.7,472.2 1383.1,468.5 1338.3,456.1"/><polygon points="1400.5,482.4 1445.7,495.0 1465.1,491.2 1419.9,478.6"/><polygon points="884.7,323.0 926.5,334.5 945.5,331.0 903.7,319.5"/><polygon points="960.8,344.0 1003.1,355.7 1022.2,352.1 979.9,340.5"/><polygon points="1037.8,365.3 1080.6,377.1 1099.7,373.5 1057.0,361.7"/><polygon points="1115.7,386.8 1158.9,398.8 1178.1,395.1 1134.9,383.2"/><polygon points="1194.5,408.6 1238.2,420.7 1257.5,417.0 1213.7,404.9"/><polygon points="1274.2,430.6 1318.4,442.8 1337.7,439.1 1293.5,426.9"/><polygon points="1354.8,452.9 1399.6,465.2 1418.9,461.5 1374.1,449.1"/><polygon points="1436.4,475.4 1481.6,487.9 1501.0,484.1 1455.7,471.6"/><polygon points="919.9,316.5 961.7,328.0 980.7,324.5 938.9,313.0"/><polygon points="996.1,337.5 1038.4,349.1 1057.5,345.5 1015.1,333.9"/><polygon points="1073.2,358.7 1116.0,370.4 1135.1,366.8 1092.3,355.1"/><polygon points="1151.2,380.1 1194.5,392.0 1213.6,388.4 1170.3,376.5"/><polygon points="1230.1,401.8 1273.8,413.9 1293.0,410.2 1249.2,398.2"/><polygon points="1309.8,423.8 1354.1,435.9 1373.3,432.2 1329.0,420.1"/><polygon points="1390.5,446.0 1435.3,458.3 1454.6,454.5 1409.8,442.2"/><polygon points="1472.2,468.4 1517.5,480.9 1536.8,477.1 1491.5,464.7"/><polygon points="955.0,310.0 996.9,321.5 1015.8,318.0 973.9,306.5"/><polygon points="1031.3,330.9 1073.7,342.5 1092.6,339.0 1050.3,327.4"/><polygon points="1108.5,352.1 1151.3,363.8 1170.3,360.2 1127.5,348.5"/><polygon points="1186.6,373.4 1229.9,385.3 1248.9,381.7 1205.6,369.8"/><polygon points="1265.5,395.1 1309.3,407.1 1328.4,403.4 1284.6,391.4"/><polygon points="1345.4,416.9 1389.7,429.1 1408.8,425.4 1364.5,413.3"/><polygon points="1426.1,439.1 1471.0,451.3 1490.2,447.6 1445.3,435.4"/><polygon points="1507.9,461.5 1553.2,473.9 1572.5,470.1 1527.1,457.7"/><polygon points="990.0,303.6 1031.9,315.0 1050.8,311.5 1008.9,300.1"/><polygon points="1066.4,324.4 1108.8,336.0 1127.7,332.4 1085.3,320.9"/><polygon points="1143.7,345.5 1186.5,357.2 1205.5,353.6 1162.6,341.9"/><polygon points="1221.8,366.8 1265.2,378.6 1284.2,375.0 1240.8,363.2"/><polygon points="1300.8,388.3 1344.7,400.3 1363.8,396.6 1319.9,384.7"/><polygon points="1380.8,410.1 1425.1,422.2 1444.2,418.5 1399.9,406.5"/><polygon points="1461.6,432.2 1506.5,444.4 1525.7,440.7 1480.8,428.5"/><polygon points="1543.5,454.5 1588.9,466.9 1608.0,463.1 1562.6,450.8"/><polygon points="1024.9,297.1 1066.9,308.5 1085.7,305.0 1043.7,293.6"/><polygon points="1101.4,317.9 1143.8,329.4 1162.7,325.9 1120.2,314.4"/><polygon points="1178.7,338.9 1221.6,350.5 1240.6,347.0 1197.6,335.3"/><polygon points="1257.0,360.1 1300.4,371.9 1319.3,368.3 1275.9,356.6"/><polygon points="1336.1,381.6 1380.0,393.5 1399.0,389.9 1355.0,378.0"/><polygon points="1416.1,403.4 1460.5,415.4 1479.5,411.7 1435.1,399.7"/><polygon points="1497.0,425.3 1542.0,437.5 1561.1,433.8 1516.1,421.6"/><polygon points="1578.9,447.6 1624.4,459.9 1643.5,456.2 1598.0,443.8"/><polygon points="1059.7,290.7 1101.7,302.1 1120.5,298.6 1078.4,287.2"/><polygon points="1136.3,311.4 1178.7,322.9 1197.6,319.4 1155.1,307.9"/><polygon points="1213.7,332.3 1256.6,344.0 1275.5,340.4 1232.5,328.8"/><polygon points="1292.0,353.5 1335.4,365.3 1354.3,361.7 1310.9,349.9"/><polygon points="1371.2,374.9 1415.1,386.8 1434.1,383.2 1390.1,371.3"/><polygon points="1451.3,396.6 1495.7,408.6 1514.7,404.9 1470.3,392.9"/><polygon points="1532.3,418.5 1577.3,430.7 1596.3,427.0 1551.3,414.8"/><polygon points="1614.3,440.7 1659.8,453.0 1678.9,449.2 1633.3,436.9"/><polygon points="1094.4,284.3 1136.4,295.6 1155.2,292.1 1113.1,280.8"/><polygon points="1171.0,304.9 1213.6,316.4 1232.3,312.9 1189.8,301.4"/><polygon points="1248.5,325.8 1291.6,337.4 1310.4,333.8 1267.3,322.3"/><polygon points="1326.9,346.9 1370.4,358.6 1389.3,355.0 1345.8,343.4"/><polygon points="1406.2,368.3 1450.2,380.1 1469.1,376.5 1425.1,364.7"/><polygon points="1486.4,389.8 1530.9,401.8 1549.8,398.2 1505.3,386.2"/><polygon points="1567.5,411.7 1612.5,423.8 1631.5,420.1 1586.5,408.0"/><polygon points="1649.6,433.8 1695.1,446.0 1714.1,442.3 1668.6,430.1"/><polygon points="1129.0,277.9 1171.1,289.2 1189.7,285.7 1147.6,274.5"/><polygon points="1205.7,298.5 1248.3,309.9 1267.0,306.4 1224.4,295.0"/><polygon points="1283.3,319.3 1326.4,330.8 1345.1,327.3 1302.0,315.8"/><polygon points="1361.8,340.3 1405.3,352.0 1424.1,348.4 1380.5,336.8"/><polygon points="1441.1,361.6 1485.2,373.4 1504.0,369.8 1459.9,358.0"/><polygon points="1521.4,383.1 1565.9,395.1 1584.8,391.4 1540.2,379.5"/><polygon points="1602.6,404.9 1647.6,417.0 1666.6,413.3 1621.5,401.2"/><polygon points="1684.7,426.9 1730.3,439.1 1749.2,435.4 1703.6,423.2"/><polygon points="1163.5,271.5 1205.6,282.8 1224.2,279.4 1182.1,268.1"/><polygon points="1240.3,292.1 1282.9,303.4 1301.6,299.9 1258.9,288.6"/><polygon points="1318.0,312.8 1361.1,324.3 1379.7,320.8 1336.6,309.3"/><polygon points="1396.5,333.8 1440.1,345.4 1458.8,341.8 1415.2,330.2"/><polygon points="1475.9,355.0 1520.0,366.7 1538.8,363.1 1494.7,351.4"/><polygon points="1556.3,376.4 1600.9,388.3 1619.7,384.7 1575.1,372.8"/><polygon points="1637.6,398.1 1682.6,410.2 1701.5,406.5 1656.4,394.5"/><polygon points="1719.8,420.1 1765.4,432.2 1784.3,428.5 1738.6,416.4"/></clipPath><g clip-path="url(#slabclip)"><polygon points="505.0,381.0 931.0,302.5 1010.5,290.0 1132.7,266.0 1757.7,440.7 1120.0,551.0" fill="#637e4e" /><g fill="#4a2418"><polygon points="526.9,389.0 568.1,400.9 587.8,397.3 546.5,385.4"/><polygon points="602.1,410.7 643.8,422.8 663.5,419.1 621.7,407.1"/><polygon points="678.2,432.7 720.4,444.9 740.1,441.2 697.9,429.0"/><polygon points="755.2,454.9 797.9,467.3 817.7,463.5 774.9,451.2"/><polygon points="833.1,477.4 876.3,489.9 896.1,486.1 852.9,473.7"/><polygon points="911.8,500.2 955.6,512.8 975.5,509.0 931.7,496.4"/><polygon points="991.6,523.2 1035.8,536.0 1055.8,532.1 1011.5,519.4"/><polygon points="1072.2,546.5 1117.0,559.5 1137.0,555.6 1092.2,542.6"/><polygon points="563.1,382.3 604.4,394.2 624.0,390.6 582.7,378.7"/><polygon points="638.4,404.0 680.2,416.0 699.9,412.3 658.0,400.3"/><polygon points="714.6,425.9 756.9,438.0 776.6,434.3 734.3,422.2"/><polygon points="791.7,448.0 834.5,460.3 854.2,456.6 811.4,444.3"/><polygon points="869.7,470.5 913.0,482.9 932.7,479.1 889.4,466.7"/><polygon points="948.6,493.2 992.4,505.7 1012.2,501.9 968.4,489.4"/><polygon points="1028.4,516.1 1072.7,528.8 1092.6,525.0 1048.2,512.3"/><polygon points="1109.2,539.3 1154.0,552.2 1173.9,548.3 1129.1,535.4"/><polygon points="599.3,375.6 640.6,387.5 660.2,383.9 618.8,372.0"/><polygon points="674.7,397.2 716.5,409.2 736.1,405.6 694.2,393.6"/><polygon points="751.0,419.1 793.3,431.2 812.9,427.5 770.6,415.4"/><polygon points="828.2,441.2 871.0,453.4 890.6,449.7 847.8,437.4"/><polygon points="906.2,463.5 949.6,475.9 969.3,472.1 925.9,459.8"/><polygon points="985.2,486.1 1029.0,498.7 1048.8,494.9 1004.9,482.3"/><polygon points="1065.1,509.0 1109.5,521.7 1129.3,517.8 1084.9,505.2"/><polygon points="1146.0,532.1 1190.8,545.0 1210.7,541.1 1165.8,528.3"/><polygon points="635.3,369.0 676.7,380.8 696.2,377.2 654.7,365.4"/><polygon points="710.8,390.5 752.7,402.4 772.2,398.8 730.3,386.9"/><polygon points="787.2,412.3 829.6,424.4 849.2,420.7 806.7,408.6"/><polygon points="864.5,434.3 907.4,446.5 927.0,442.8 884.1,430.6"/><polygon points="942.6,456.6 986.0,468.9 1005.7,465.2 962.3,452.8"/><polygon points="1021.7,479.1 1065.6,491.6 1085.3,487.8 1041.4,475.3"/><polygon points="1101.7,501.9 1146.1,514.6 1165.9,510.7 1121.4,498.1"/><polygon points="1182.7,525.0 1227.6,537.8 1247.4,533.9 1202.4,521.1"/><polygon points="671.3,362.4 712.7,374.1 732.1,370.5 690.6,358.8"/><polygon points="746.9,383.8 788.8,395.7 808.3,392.1 766.3,380.2"/><polygon points="823.3,405.5 865.8,417.5 885.3,413.9 842.8,401.9"/><polygon points="900.7,427.5 943.6,439.6 963.2,435.9 920.2,423.8"/><polygon points="979.0,449.7 1022.4,462.0 1042.0,458.2 998.5,445.9"/><polygon points="1058.1,472.1 1102.0,484.6 1121.7,480.8 1077.7,468.3"/><polygon points="1138.2,494.8 1182.7,507.4 1202.3,503.6 1157.9,491.0"/><polygon points="1219.2,517.8 1264.2,530.6 1284.0,526.7 1238.9,514.0"/><polygon points="707.1,355.7 748.6,367.5 768.0,363.9 726.4,352.2"/><polygon points="782.8,377.1 824.8,389.0 844.2,385.4 802.2,373.5"/><polygon points="859.4,398.8 901.8,410.8 921.3,407.1 878.8,395.1"/><polygon points="936.8,420.6 979.8,432.8 999.3,429.1 956.3,417.0"/><polygon points="1015.2,442.8 1058.6,455.0 1078.2,451.3 1034.7,439.0"/><polygon points="1094.4,465.1 1138.4,477.6 1158.0,473.8 1114.0,461.4"/><polygon points="1174.6,487.8 1219.1,500.4 1238.7,496.5 1194.2,484.0"/><polygon points="1255.7,510.7 1300.7,523.4 1320.4,519.6 1275.4,506.9"/><polygon points="742.8,349.2 784.4,360.8 803.7,357.3 762.1,345.6"/><polygon points="818.6,370.5 860.7,382.3 880.0,378.7 837.9,366.9"/><polygon points="895.3,392.0 937.8,404.0 957.2,400.3 914.6,388.4"/><polygon points="972.8,413.8 1015.8,425.9 1035.3,422.2 992.2,410.2"/><polygon points="1051.2,435.9 1094.8,448.1 1114.2,444.4 1070.7,432.2"/><polygon points="1130.6,458.2 1174.6,470.6 1194.1,466.8 1150.1,454.5"/><polygon points="1210.9,480.8 1255.4,493.3 1275.0,489.5 1230.4,477.0"/><polygon points="1292.1,503.6 1337.1,516.3 1356.8,512.4 1311.6,499.8"/><polygon points="778.4,342.6 820.1,354.2 839.3,350.7 797.6,339.0"/><polygon points="854.3,363.8 896.4,375.6 915.7,372.0 873.6,360.2"/><polygon points="931.1,385.3 973.7,397.2 993.0,393.6 950.4,381.7"/><polygon points="1008.7,407.0 1051.8,419.1 1071.1,415.4 1028.0,403.4"/><polygon points="1087.2,429.0 1130.8,441.2 1150.2,437.5 1106.6,425.3"/><polygon points="1166.6,451.3 1210.7,463.6 1230.2,459.9 1186.1,447.5"/><polygon points="1247.0,473.8 1291.6,486.3 1311.1,482.5 1266.5,470.0"/><polygon points="1328.3,496.5 1373.4,509.2 1393.0,505.3 1347.8,492.7"/><polygon points="814.0,336.0 855.6,347.6 874.8,344.1 833.1,332.5"/><polygon points="889.9,357.2 932.1,369.0 951.3,365.4 909.1,353.6"/><polygon points="966.8,378.6 1009.4,390.5 1028.7,386.9 986.0,375.0"/><polygon points="1044.5,400.3 1087.6,412.3 1106.9,408.6 1063.8,396.6"/><polygon points="1123.1,422.2 1166.7,434.4 1186.1,430.6 1142.4,418.5"/><polygon points="1202.6,444.4 1246.7,456.7 1266.1,452.9 1222.0,440.6"/><polygon points="1283.1,466.8 1327.7,479.2 1347.1,475.4 1302.5,463.0"/><polygon points="1364.4,489.5 1409.6,502.1 1429.1,498.2 1383.9,485.7"/><polygon points="849.4,329.5 891.1,341.1 910.2,337.5 868.5,326.0"/><polygon points="925.4,350.6 967.6,362.3 986.8,358.7 944.6,347.0"/><polygon points="1002.4,371.9 1045.0,383.8 1064.2,380.2 1021.5,368.4"/><polygon points="1080.2,393.5 1123.3,405.5 1142.6,401.9 1099.4,389.9"/><polygon points="1158.9,415.4 1202.5,427.5 1221.8,423.8 1178.1,411.7"/><polygon points="1238.5,437.5 1282.6,449.7 1302.0,446.0 1257.8,433.8"/><polygon points="1319.0,459.8 1363.7,472.2 1383.1,468.5 1338.3,456.1"/><polygon points="1400.5,482.4 1445.7,495.0 1465.1,491.2 1419.9,478.6"/><polygon points="884.7,323.0 926.5,334.5 945.5,331.0 903.7,319.5"/><polygon points="960.8,344.0 1003.1,355.7 1022.2,352.1 979.9,340.5"/><polygon points="1037.8,365.3 1080.6,377.1 1099.7,373.5 1057.0,361.7"/><polygon points="1115.7,386.8 1158.9,398.8 1178.1,395.1 1134.9,383.2"/><polygon points="1194.5,408.6 1238.2,420.7 1257.5,417.0 1213.7,404.9"/><polygon points="1274.2,430.6 1318.4,442.8 1337.7,439.1 1293.5,426.9"/><polygon points="1354.8,452.9 1399.6,465.2 1418.9,461.5 1374.1,449.1"/><polygon points="1436.4,475.4 1481.6,487.9 1501.0,484.1 1455.7,471.6"/><polygon points="919.9,316.5 961.7,328.0 980.7,324.5 938.9,313.0"/><polygon points="996.1,337.5 1038.4,349.1 1057.5,345.5 1015.1,333.9"/><polygon points="1073.2,358.7 1116.0,370.4 1135.1,366.8 1092.3,355.1"/><polygon points="1151.2,380.1 1194.5,392.0 1213.6,388.4 1170.3,376.5"/><polygon points="1230.1,401.8 1273.8,413.9 1293.0,410.2 1249.2,398.2"/><polygon points="1309.8,423.8 1354.1,435.9 1373.3,432.2 1329.0,420.1"/><polygon points="1390.5,446.0 1435.3,458.3 1454.6,454.5 1409.8,442.2"/><polygon points="1472.2,468.4 1517.5,480.9 1536.8,477.1 1491.5,464.7"/><polygon points="955.0,310.0 996.9,321.5 1015.8,318.0 973.9,306.5"/><polygon points="1031.3,330.9 1073.7,342.5 1092.6,339.0 1050.3,327.4"/><polygon points="1108.5,352.1 1151.3,363.8 1170.3,360.2 1127.5,348.5"/><polygon points="1186.6,373.4 1229.9,385.3 1248.9,381.7 1205.6,369.8"/><polygon points="1265.5,395.1 1309.3,407.1 1328.4,403.4 1284.6,391.4"/><polygon points="1345.4,416.9 1389.7,429.1 1408.8,425.4 1364.5,413.3"/><polygon points="1426.1,439.1 1471.0,451.3 1490.2,447.6 1445.3,435.4"/><polygon points="1507.9,461.5 1553.2,473.9 1572.5,470.1 1527.1,457.7"/><polygon points="990.0,303.6 1031.9,315.0 1050.8,311.5 1008.9,300.1"/><polygon points="1066.4,324.4 1108.8,336.0 1127.7,332.4 1085.3,320.9"/><polygon points="1143.7,345.5 1186.5,357.2 1205.5,353.6 1162.6,341.9"/><polygon points="1221.8,366.8 1265.2,378.6 1284.2,375.0 1240.8,363.2"/><polygon points="1300.8,388.3 1344.7,400.3 1363.8,396.6 1319.9,384.7"/><polygon points="1380.8,410.1 1425.1,422.2 1444.2,418.5 1399.9,406.5"/><polygon points="1461.6,432.2 1506.5,444.4 1525.7,440.7 1480.8,428.5"/><polygon points="1543.5,454.5 1588.9,466.9 1608.0,463.1 1562.6,450.8"/><polygon points="1024.9,297.1 1066.9,308.5 1085.7,305.0 1043.7,293.6"/><polygon points="1101.4,317.9 1143.8,329.4 1162.7,325.9 1120.2,314.4"/><polygon points="1178.7,338.9 1221.6,350.5 1240.6,347.0 1197.6,335.3"/><polygon points="1257.0,360.1 1300.4,371.9 1319.3,368.3 1275.9,356.6"/><polygon points="1336.1,381.6 1380.0,393.5 1399.0,389.9 1355.0,378.0"/><polygon points="1416.1,403.4 1460.5,415.4 1479.5,411.7 1435.1,399.7"/><polygon points="1497.0,425.3 1542.0,437.5 1561.1,433.8 1516.1,421.6"/><polygon points="1578.9,447.6 1624.4,459.9 1643.5,456.2 1598.0,443.8"/><polygon points="1059.7,290.7 1101.7,302.1 1120.5,298.6 1078.4,287.2"/><polygon points="1136.3,311.4 1178.7,322.9 1197.6,319.4 1155.1,307.9"/><polygon points="1213.7,332.3 1256.6,344.0 1275.5,340.4 1232.5,328.8"/><polygon points="1292.0,353.5 1335.4,365.3 1354.3,361.7 1310.9,349.9"/><polygon points="1371.2,374.9 1415.1,386.8 1434.1,383.2 1390.1,371.3"/><polygon points="1451.3,396.6 1495.7,408.6 1514.7,404.9 1470.3,392.9"/><polygon points="1532.3,418.5 1577.3,430.7 1596.3,427.0 1551.3,414.8"/><polygon points="1614.3,440.7 1659.8,453.0 1678.9,449.2 1633.3,436.9"/><polygon points="1094.4,284.3 1136.4,295.6 1155.2,292.1 1113.1,280.8"/><polygon points="1171.0,304.9 1213.6,316.4 1232.3,312.9 1189.8,301.4"/><polygon points="1248.5,325.8 1291.6,337.4 1310.4,333.8 1267.3,322.3"/><polygon points="1326.9,346.9 1370.4,358.6 1389.3,355.0 1345.8,343.4"/><polygon points="1406.2,368.3 1450.2,380.1 1469.1,376.5 1425.1,364.7"/><polygon points="1486.4,389.8 1530.9,401.8 1549.8,398.2 1505.3,386.2"/><polygon points="1567.5,411.7 1612.5,423.8 1631.5,420.1 1586.5,408.0"/><polygon points="1649.6,433.8 1695.1,446.0 1714.1,442.3 1668.6,430.1"/><polygon points="1129.0,277.9 1171.1,289.2 1189.7,285.7 1147.6,274.5"/><polygon points="1205.7,298.5 1248.3,309.9 1267.0,306.4 1224.4,295.0"/><polygon points="1283.3,319.3 1326.4,330.8 1345.1,327.3 1302.0,315.8"/><polygon points="1361.8,340.3 1405.3,352.0 1424.1,348.4 1380.5,336.8"/><polygon points="1441.1,361.6 1485.2,373.4 1504.0,369.8 1459.9,358.0"/><polygon points="1521.4,383.1 1565.9,395.1 1584.8,391.4 1540.2,379.5"/><polygon points="1602.6,404.9 1647.6,417.0 1666.6,413.3 1621.5,401.2"/><polygon points="1684.7,426.9 1730.3,439.1 1749.2,435.4 1703.6,423.2"/><polygon points="1163.5,271.5 1205.6,282.8 1224.2,279.4 1182.1,268.1"/><polygon points="1240.3,292.1 1282.9,303.4 1301.6,299.9 1258.9,288.6"/><polygon points="1318.0,312.8 1361.1,324.3 1379.7,320.8 1336.6,309.3"/><polygon points="1396.5,333.8 1440.1,345.4 1458.8,341.8 1415.2,330.2"/><polygon points="1475.9,355.0 1520.0,366.7 1538.8,363.1 1494.7,351.4"/><polygon points="1556.3,376.4 1600.9,388.3 1619.7,384.7 1575.1,372.8"/><polygon points="1637.6,398.1 1682.6,410.2 1701.5,406.5 1656.4,394.5"/><polygon points="1719.8,420.1 1765.4,432.2 1784.3,428.5 1738.6,416.4"/></g><g clip-path="url(#holeclip)"><rect x="600.4" y="360.2" width="12" height="110" fill="#b052b0"/><rect x="600.4" y="360.2" width="5" height="110" fill="#a048a8"/><rect x="814.3" y="320.9" width="12" height="110" fill="#b052b0"/><rect x="814.3" y="320.9" width="5" height="110" fill="#a048a8"/><rect x="707.8" y="340.5" width="12" height="110" fill="#b052b0"/><rect x="707.8" y="340.5" width="5" height="110" fill="#a048a8"/><rect x="783.3" y="361.7" width="12" height="110" fill="#b052b0"/><rect x="783.3" y="361.7" width="5" height="110" fill="#a048a8"/><rect x="859.6" y="383.2" width="12" height="110" fill="#b052b0"/><rect x="859.6" y="383.2" width="5" height="110" fill="#a048a8"/><rect x="936.8" y="404.9" width="12" height="110" fill="#b052b0"/><rect x="936.8" y="404.9" width="5" height="110" fill="#a048a8"/><rect x="1014.8" y="426.8" width="12" height="110" fill="#b052b0"/><rect x="1014.8" y="426.8" width="5" height="110" fill="#a048a8"/><rect x="1093.8" y="449.0" width="12" height="110" fill="#b052b0"/><rect x="1093.8" y="449.0" width="5" height="110" fill="#a048a8"/><rect x="1173.7" y="471.5" width="12" height="110" fill="#b052b0"/><rect x="1173.7" y="471.5" width="5" height="110" fill="#a048a8"/><rect x="1254.6" y="494.2" width="12" height="110" fill="#b052b0"/><rect x="1254.6" y="494.2" width="5" height="110" fill="#a048a8"/><rect x="919.8" y="301.5" width="12" height="110" fill="#b052b0"/><rect x="919.8" y="301.5" width="5" height="110" fill="#a048a8"/><rect x="995.7" y="322.3" width="12" height="110" fill="#b052b0"/><rect x="995.7" y="322.3" width="5" height="110" fill="#a048a8"/><rect x="1072.6" y="343.4" width="12" height="110" fill="#b052b0"/><rect x="1072.6" y="343.4" width="5" height="110" fill="#a048a8"/><rect x="1150.3" y="364.7" width="12" height="110" fill="#b052b0"/><rect x="1150.3" y="364.7" width="5" height="110" fill="#a048a8"/><rect x="1228.9" y="386.2" width="12" height="110" fill="#b052b0"/><rect x="1228.9" y="386.2" width="5" height="110" fill="#a048a8"/><rect x="1308.4" y="408.0" width="12" height="110" fill="#b052b0"/><rect x="1308.4" y="408.0" width="5" height="110" fill="#a048a8"/><rect x="1388.8" y="430.0" width="12" height="110" fill="#b052b0"/><rect x="1388.8" y="430.0" width="5" height="110" fill="#a048a8"/><rect x="1470.1" y="452.3" width="12" height="110" fill="#b052b0"/><rect x="1470.1" y="452.3" width="5" height="110" fill="#a048a8"/><rect x="1128.0" y="263.2" width="12" height="110" fill="#b052b0"/><rect x="1128.0" y="263.2" width="5" height="110" fill="#a048a8"/><rect x="1166.2" y="273.4" width="12" height="110" fill="#b052b0"/><rect x="1166.2" y="273.4" width="5" height="110" fill="#a048a8"/><rect x="959.4" y="309.5" width="12" height="110" fill="#b052b0"/><rect x="959.4" y="309.5" width="5" height="110" fill="#a048a8"/><rect x="1038.9" y="279.6" width="12" height="110" fill="#b052b0"/><rect x="1038.9" y="279.6" width="5" height="110" fill="#a048a8"/><rect x="1074.7" y="289.3" width="12" height="110" fill="#b052b0"/><rect x="1074.7" y="289.3" width="5" height="110" fill="#a048a8"/><rect x="1088.7" y="270.4" width="12" height="110" fill="#b052b0"/><rect x="1088.7" y="270.4" width="5" height="110" fill="#a048a8"/><rect x="1123.4" y="281.6" width="12" height="110" fill="#b052b0"/><rect x="1123.4" y="281.6" width="5" height="110" fill="#a048a8"/></g><polygon points="406.3,362.0 1186.2,587.8 1197.4,585.6 417.2,360.0" fill="#54673d" /><polygon points="442.5,355.4 1223.4,580.4 1234.5,578.2 453.3,353.4" fill="#54673d" /><polygon points="478.6,348.8 1260.4,573.1 1271.4,570.9 489.4,346.9" fill="#54673d" /><polygon points="514.5,342.3 1297.3,565.8 1308.3,563.6 525.3,340.3" fill="#54673d" /><polygon points="550.4,335.7 1334.0,558.5 1345.0,556.3 561.1,333.8" fill="#54673d" /><polygon points="586.1,329.2 1370.7,551.3 1381.7,549.1 596.8,327.3" fill="#54673d" /><polygon points="621.8,322.7 1407.2,544.0 1418.2,541.9 632.5,320.8" fill="#54673d" /><polygon points="657.3,316.2 1443.7,536.8 1454.6,534.7 668.0,314.3" fill="#54673d" /><polygon points="692.8,309.7 1480.0,529.6 1490.9,527.5 703.4,307.8" fill="#54673d" /><polygon points="728.1,303.3 1516.2,522.5 1527.0,520.3 738.7,301.4" fill="#54673d" /><polygon points="763.3,296.9 1552.3,515.3 1563.1,513.2 773.9,294.9" fill="#54673d" /><polygon points="798.5,290.5 1588.3,508.2 1599.1,506.1 809.0,288.5" fill="#54673d" /><polygon points="833.5,284.1 1624.2,501.1 1634.9,499.0 844.0,282.2" fill="#54673d" /><polygon points="868.4,277.7 1659.9,494.0 1670.6,491.9 878.9,275.8" fill="#54673d" /><polygon points="903.3,271.3 1695.6,486.9 1706.3,484.8 913.7,269.4" fill="#54673d" /><polygon points="938.0,265.0 1731.1,479.9 1741.8,477.8 948.4,263.1" fill="#54673d" /><polygon points="972.6,258.7 1766.6,472.9 1777.2,470.8 983.0,256.8" fill="#54673d" /><polygon points="1007.1,252.4 1801.9,465.9 1812.5,463.8 1017.5,250.5" fill="#54673d" /><polygon points="1041.6,246.1 1837.1,458.9 1847.7,456.8 1051.9,244.2" fill="#54673d" /><polygon points="1075.9,239.8 1872.2,452.0 1882.7,449.9 1086.2,238.0" fill="#54673d" /><line x1="527.4" y1="374.8" x2="1152.2" y2="554.6" stroke="#66899a" stroke-width="1.5" stroke-dasharray="1.2 2"/><line x1="563.6" y1="368.1" x2="1189.1" y2="547.3" stroke="#66899a" stroke-width="1.5" stroke-dasharray="1.2 2"/><line x1="599.6" y1="361.5" x2="1225.8" y2="540.1" stroke="#66899a" stroke-width="1.5" stroke-dasharray="1.2 2"/><line x1="635.5" y1="354.9" x2="1262.5" y2="532.9" stroke="#66899a" stroke-width="1.5" stroke-dasharray="1.2 2"/><line x1="671.3" y1="348.3" x2="1299.0" y2="525.7" stroke="#66899a" stroke-width="1.5" stroke-dasharray="1.2 2"/><line x1="707.0" y1="341.7" x2="1335.4" y2="518.6" stroke="#66899a" stroke-width="1.5" stroke-dasharray="1.2 2"/><line x1="742.7" y1="335.2" x2="1371.7" y2="511.5" stroke="#66899a" stroke-width="1.5" stroke-dasharray="1.2 2"/><line x1="778.1" y1="328.7" x2="1407.9" y2="504.3" stroke="#66899a" stroke-width="1.5" stroke-dasharray="1.2 2"/><line x1="813.5" y1="322.2" x2="1444.0" y2="497.3" stroke="#66899a" stroke-width="1.5" stroke-dasharray="1.2 2"/><line x1="848.8" y1="315.7" x2="1480.0" y2="490.2" stroke="#66899a" stroke-width="1.5" stroke-dasharray="1.2 2"/><line x1="884.0" y1="309.2" x2="1515.9" y2="483.2" stroke="#66899a" stroke-width="1.5" stroke-dasharray="1.2 2"/><line x1="919.1" y1="302.7" x2="1551.6" y2="476.1" stroke="#66899a" stroke-width="1.5" stroke-dasharray="1.2 2"/><line x1="954.1" y1="296.3" x2="1587.3" y2="469.1" stroke="#66899a" stroke-width="1.5" stroke-dasharray="1.2 2"/><line x1="989.0" y1="289.9" x2="1622.8" y2="462.2" stroke="#66899a" stroke-width="1.5" stroke-dasharray="1.2 2"/><line x1="1023.8" y1="283.5" x2="1658.3" y2="455.2" stroke="#66899a" stroke-width="1.5" stroke-dasharray="1.2 2"/><line x1="1058.4" y1="277.1" x2="1693.6" y2="448.3" stroke="#66899a" stroke-width="1.5" stroke-dasharray="1.2 2"/><line x1="1093.0" y1="270.8" x2="1728.8" y2="441.4" stroke="#66899a" stroke-width="1.5" stroke-dasharray="1.2 2"/><line x1="1127.5" y1="264.4" x2="1763.9" y2="434.5" stroke="#66899a" stroke-width="1.5" stroke-dasharray="1.2 2"/><line x1="1161.9" y1="258.1" x2="1798.9" y2="427.6" stroke="#66899a" stroke-width="1.5" stroke-dasharray="1.2 2"/><line x1="494.4" y1="379.1" x2="1130.2" y2="262.2" stroke="#66899a" stroke-width="1.5" stroke-dasharray="1.2 2"/><line x1="569.2" y1="400.7" x2="1206.7" y2="282.6" stroke="#66899a" stroke-width="1.5" stroke-dasharray="1.2 2"/><line x1="644.9" y1="422.6" x2="1283.9" y2="303.2" stroke="#66899a" stroke-width="1.5" stroke-dasharray="1.2 2"/><line x1="721.5" y1="444.7" x2="1362.1" y2="324.1" stroke="#66899a" stroke-width="1.5" stroke-dasharray="1.2 2"/><line x1="799.0" y1="467.1" x2="1441.1" y2="345.2" stroke="#66899a" stroke-width="1.5" stroke-dasharray="1.2 2"/><line x1="877.4" y1="489.7" x2="1521.1" y2="366.5" stroke="#66899a" stroke-width="1.5" stroke-dasharray="1.2 2"/><line x1="956.7" y1="512.6" x2="1601.9" y2="388.1" stroke="#66899a" stroke-width="1.5" stroke-dasharray="1.2 2"/><line x1="1036.9" y1="535.8" x2="1683.7" y2="410.0" stroke="#66899a" stroke-width="1.5" stroke-dasharray="1.2 2"/><line x1="1118.1" y1="559.3" x2="1766.4" y2="432.0" stroke="#66899a" stroke-width="1.5" stroke-dasharray="1.2 2"/></g><polygon points="931.0,302.7 1010.5,291.0 1040.0,298.0 1034.0,300.0 958.0,310.5" fill="#2fa062" /><polygon points="958.0,310.5 1034.0,300.0 1040.0,304.0 968.0,315.0" fill="#000" /><polygon points="1047.0,283.0 1131.0,265.0 1166.0,272.6 1160.0,277.0 1115.0,283.0 1070.6,288.3" fill="#2fa062" /><polygon points="1075.0,285.0 1112.0,278.0 1120.0,281.0 1085.0,288.0" fill="#000" /><rect x="601.4" y="360.2" width="10" height="14" fill="#a050c0"/><rect x="599.4" y="363.2" width="14" height="1.5" fill="#d07020"/><rect x="605.7" y="362.2" width="1.8" height="12" fill="#c89a20"/><rect x="607.5" y="364.2" width="1.4" height="5" fill="#c04a3a"/><ellipse cx="603.9" cy="361.2" rx="1.8" ry="2.4" fill="#b8eef2"/><ellipse cx="609.4" cy="361.2" rx="1.8" ry="2.4" fill="#b8eef2"/><rect x="815.3" y="320.9" width="10" height="14" fill="#a050c0"/><rect x="813.3" y="323.9" width="14" height="1.5" fill="#d07020"/><rect x="819.6" y="322.9" width="1.8" height="12" fill="#c89a20"/><rect x="821.4" y="324.9" width="1.4" height="5" fill="#c04a3a"/><ellipse cx="817.8" cy="321.9" rx="1.8" ry="2.4" fill="#b8eef2"/><ellipse cx="823.3" cy="321.9" rx="1.8" ry="2.4" fill="#b8eef2"/><rect x="708.8" y="340.5" width="10" height="14" fill="#a050c0"/><rect x="706.8" y="343.5" width="14" height="1.5" fill="#d07020"/><rect x="713.1" y="342.5" width="1.8" height="12" fill="#c89a20"/><rect x="714.9" y="344.5" width="1.4" height="5" fill="#c04a3a"/><ellipse cx="711.3" cy="341.5" rx="1.8" ry="2.4" fill="#b8eef2"/><ellipse cx="716.8" cy="341.5" rx="1.8" ry="2.4" fill="#b8eef2"/><rect x="784.3" y="361.7" width="10" height="14" fill="#a050c0"/><rect x="782.3" y="364.7" width="14" height="1.5" fill="#d07020"/><rect x="788.6" y="363.7" width="1.8" height="12" fill="#c89a20"/><rect x="790.4" y="365.7" width="1.4" height="5" fill="#c04a3a"/><ellipse cx="786.8" cy="362.7" rx="1.8" ry="2.4" fill="#b8eef2"/><ellipse cx="792.3" cy="362.7" rx="1.8" ry="2.4" fill="#b8eef2"/><rect x="860.6" y="383.2" width="10" height="14" fill="#a050c0"/><rect x="858.6" y="386.2" width="14" height="1.5" fill="#d07020"/><rect x="864.9" y="385.2" width="1.8" height="12" fill="#c89a20"/><rect x="866.7" y="387.2" width="1.4" height="5" fill="#c04a3a"/><ellipse cx="863.1" cy="384.2" rx="1.8" ry="2.4" fill="#b8eef2"/><ellipse cx="868.6" cy="384.2" rx="1.8" ry="2.4" fill="#b8eef2"/><rect x="937.8" y="404.9" width="10" height="14" fill="#a050c0"/><rect x="935.8" y="407.9" width="14" height="1.5" fill="#d07020"/><rect x="942.1" y="406.9" width="1.8" height="12" fill="#c89a20"/><rect x="943.9" y="408.9" width="1.4" height="5" fill="#c04a3a"/><ellipse cx="940.3" cy="405.9" rx="1.8" ry="2.4" fill="#b8eef2"/><ellipse cx="945.8" cy="405.9" rx="1.8" ry="2.4" fill="#b8eef2"/><rect x="1015.8" y="426.8" width="10" height="14" fill="#a050c0"/><rect x="1013.8" y="429.8" width="14" height="1.5" fill="#d07020"/><rect x="1020.1" y="428.8" width="1.8" height="12" fill="#c89a20"/><rect x="1021.9" y="430.8" width="1.4" height="5" fill="#c04a3a"/><ellipse cx="1018.3" cy="427.8" rx="1.8" ry="2.4" fill="#b8eef2"/><ellipse cx="1023.8" cy="427.8" rx="1.8" ry="2.4" fill="#b8eef2"/><rect x="1094.8" y="449.0" width="10" height="14" fill="#a050c0"/><rect x="1092.8" y="452.0" width="14" height="1.5" fill="#d07020"/><rect x="1099.1" y="451.0" width="1.8" height="12" fill="#c89a20"/><rect x="1100.9" y="453.0" width="1.4" height="5" fill="#c04a3a"/><ellipse cx="1097.3" cy="450.0" rx="1.8" ry="2.4" fill="#b8eef2"/><ellipse cx="1102.8" cy="450.0" rx="1.8" ry="2.4" fill="#b8eef2"/><rect x="1174.7" y="471.5" width="10" height="14" fill="#a050c0"/><rect x="1172.7" y="474.5" width="14" height="1.5" fill="#d07020"/><rect x="1179.0" y="473.5" width="1.8" height="12" fill="#c89a20"/><rect x="1180.8" y="475.5" width="1.4" height="5" fill="#c04a3a"/><ellipse cx="1177.2" cy="472.5" rx="1.8" ry="2.4" fill="#b8eef2"/><ellipse cx="1182.7" cy="472.5" rx="1.8" ry="2.4" fill="#b8eef2"/><rect x="920.8" y="301.5" width="10" height="14" fill="#a050c0"/><rect x="918.8" y="304.5" width="14" height="1.5" fill="#d07020"/><rect x="925.1" y="303.5" width="1.8" height="12" fill="#c89a20"/><rect x="926.9" y="305.5" width="1.4" height="5" fill="#c04a3a"/><ellipse cx="923.3" cy="302.5" rx="1.8" ry="2.4" fill="#b8eef2"/><ellipse cx="928.8" cy="302.5" rx="1.8" ry="2.4" fill="#b8eef2"/><rect x="996.7" y="322.3" width="10" height="14" fill="#a050c0"/><rect x="994.7" y="325.3" width="14" height="1.5" fill="#d07020"/><rect x="1001.0" y="324.3" width="1.8" height="12" fill="#c89a20"/><rect x="1002.8" y="326.3" width="1.4" height="5" fill="#c04a3a"/><ellipse cx="999.2" cy="323.3" rx="1.8" ry="2.4" fill="#b8eef2"/><ellipse cx="1004.7" cy="323.3" rx="1.8" ry="2.4" fill="#b8eef2"/><rect x="1073.6" y="343.4" width="10" height="14" fill="#a050c0"/><rect x="1071.6" y="346.4" width="14" height="1.5" fill="#d07020"/><rect x="1077.9" y="345.4" width="1.8" height="12" fill="#c89a20"/><rect x="1079.7" y="347.4" width="1.4" height="5" fill="#c04a3a"/><ellipse cx="1076.1" cy="344.4" rx="1.8" ry="2.4" fill="#b8eef2"/><ellipse cx="1081.6" cy="344.4" rx="1.8" ry="2.4" fill="#b8eef2"/><rect x="1151.3" y="364.7" width="10" height="14" fill="#a050c0"/><rect x="1149.3" y="367.7" width="14" height="1.5" fill="#d07020"/><rect x="1155.6" y="366.7" width="1.8" height="12" fill="#c89a20"/><rect x="1157.4" y="368.7" width="1.4" height="5" fill="#c04a3a"/><ellipse cx="1153.8" cy="365.7" rx="1.8" ry="2.4" fill="#b8eef2"/><ellipse cx="1159.3" cy="365.7" rx="1.8" ry="2.4" fill="#b8eef2"/><rect x="1129.0" y="263.2" width="10" height="14" fill="#a050c0"/><rect x="1127.0" y="266.2" width="14" height="1.5" fill="#d07020"/><rect x="1133.3" y="265.2" width="1.8" height="12" fill="#c89a20"/><rect x="1135.1" y="267.2" width="1.4" height="5" fill="#c04a3a"/><ellipse cx="1131.5" cy="264.2" rx="1.8" ry="2.4" fill="#b8eef2"/><ellipse cx="1137.0" cy="264.2" rx="1.8" ry="2.4" fill="#b8eef2"/><rect x="1167.2" y="273.4" width="10" height="14" fill="#a050c0"/><rect x="1165.2" y="276.4" width="14" height="1.5" fill="#d07020"/><rect x="1171.5" y="275.4" width="1.8" height="12" fill="#c89a20"/><rect x="1173.3" y="277.4" width="1.4" height="5" fill="#c04a3a"/><ellipse cx="1169.7" cy="274.4" rx="1.8" ry="2.4" fill="#b8eef2"/><ellipse cx="1175.2" cy="274.4" rx="1.8" ry="2.4" fill="#b8eef2"/><rect x="960.4" y="309.5" width="10" height="14" fill="#a050c0"/><rect x="958.4" y="312.5" width="14" height="1.5" fill="#d07020"/><rect x="964.7" y="311.5" width="1.8" height="12" fill="#c89a20"/><rect x="966.5" y="313.5" width="1.4" height="5" fill="#c04a3a"/><ellipse cx="962.9" cy="310.5" rx="1.8" ry="2.4" fill="#b8eef2"/><ellipse cx="968.4" cy="310.5" rx="1.8" ry="2.4" fill="#b8eef2"/><rect x="1039.9" y="279.6" width="10" height="14" fill="#a050c0"/><rect x="1037.9" y="282.6" width="14" height="1.5" fill="#d07020"/><rect x="1044.2" y="281.6" width="1.8" height="12" fill="#c89a20"/><rect x="1046.0" y="283.6" width="1.4" height="5" fill="#c04a3a"/><ellipse cx="1042.4" cy="280.6" rx="1.8" ry="2.4" fill="#b8eef2"/><ellipse cx="1047.9" cy="280.6" rx="1.8" ry="2.4" fill="#b8eef2"/><rect x="1075.7" y="289.3" width="10" height="14" fill="#a050c0"/><rect x="1073.7" y="292.3" width="14" height="1.5" fill="#d07020"/><rect x="1080.0" y="291.3" width="1.8" height="12" fill="#c89a20"/><rect x="1081.8" y="293.3" width="1.4" height="5" fill="#c04a3a"/><ellipse cx="1078.2" cy="290.3" rx="1.8" ry="2.4" fill="#b8eef2"/><ellipse cx="1083.7" cy="290.3" rx="1.8" ry="2.4" fill="#b8eef2"/><rect x="1089.7" y="270.4" width="10" height="14" fill="#a050c0"/><rect x="1087.7" y="273.4" width="14" height="1.5" fill="#d07020"/><rect x="1094.0" y="272.4" width="1.8" height="12" fill="#c89a20"/><rect x="1095.8" y="274.4" width="1.4" height="5" fill="#c04a3a"/><ellipse cx="1092.2" cy="271.4" rx="1.8" ry="2.4" fill="#b8eef2"/><ellipse cx="1097.7" cy="271.4" rx="1.8" ry="2.4" fill="#b8eef2"/><rect x="1124.4" y="281.6" width="10" height="14" fill="#a050c0"/><rect x="1122.4" y="284.6" width="14" height="1.5" fill="#d07020"/><rect x="1128.7" y="283.6" width="1.8" height="12" fill="#c89a20"/><rect x="1130.5" y="285.6" width="1.4" height="5" fill="#c04a3a"/><ellipse cx="1126.9" cy="282.6" rx="1.8" ry="2.4" fill="#b8eef2"/><ellipse cx="1132.4" cy="282.6" rx="1.8" ry="2.4" fill="#b8eef2"/><rect x="608.6" y="397.1" width="1.8" height="12" fill="#c89a20"/><rect x="610.4" y="399.1" width="1.4" height="5" fill="#c04a3a"/><ellipse cx="606.8" cy="396.1" rx="1.8" ry="2.4" fill="#b8eef2"/><ellipse cx="612.3" cy="396.1" rx="1.8" ry="2.4" fill="#b8eef2"/><rect x="644.8" y="390.4" width="1.8" height="12" fill="#c89a20"/><rect x="646.6" y="392.4" width="1.4" height="5" fill="#c04a3a"/><ellipse cx="646.0" cy="389.4" rx="1.8" ry="2.4" fill="#b8eef2"/><rect x="680.9" y="383.7" width="1.8" height="12" fill="#c89a20"/><rect x="682.7" y="385.7" width="1.4" height="5" fill="#c04a3a"/><ellipse cx="679.1" cy="382.7" rx="1.8" ry="2.4" fill="#b8eef2"/><ellipse cx="684.6" cy="382.7" rx="1.8" ry="2.4" fill="#b8eef2"/><rect x="716.9" y="377.0" width="1.8" height="12" fill="#c89a20"/><rect x="718.7" y="379.0" width="1.4" height="5" fill="#c04a3a"/><ellipse cx="718.1" cy="376.0" rx="1.8" ry="2.4" fill="#b8eef2"/><rect x="752.8" y="370.3" width="1.8" height="12" fill="#c89a20"/><rect x="754.6" y="372.3" width="1.4" height="5" fill="#c04a3a"/><ellipse cx="751.0" cy="369.3" rx="1.8" ry="2.4" fill="#b8eef2"/><ellipse cx="756.5" cy="369.3" rx="1.8" ry="2.4" fill="#b8eef2"/><rect x="824.2" y="357.1" width="1.8" height="12" fill="#c89a20"/><rect x="826.0" y="359.1" width="1.4" height="5" fill="#c04a3a"/><ellipse cx="822.4" cy="356.1" rx="1.8" ry="2.4" fill="#b8eef2"/><ellipse cx="827.9" cy="356.1" rx="1.8" ry="2.4" fill="#b8eef2"/><rect x="859.8" y="350.5" width="1.8" height="12" fill="#c89a20"/><rect x="861.6" y="352.5" width="1.4" height="5" fill="#c04a3a"/><ellipse cx="861.0" cy="349.5" rx="1.8" ry="2.4" fill="#b8eef2"/><rect x="895.3" y="343.9" width="1.8" height="12" fill="#c89a20"/><rect x="897.1" y="345.9" width="1.4" height="5" fill="#c04a3a"/><ellipse cx="893.5" cy="342.9" rx="1.8" ry="2.4" fill="#b8eef2"/><ellipse cx="899.0" cy="342.9" rx="1.8" ry="2.4" fill="#b8eef2"/><rect x="930.6" y="337.4" width="1.8" height="12" fill="#c89a20"/><rect x="932.4" y="339.4" width="1.4" height="5" fill="#c04a3a"/><ellipse cx="931.8" cy="336.4" rx="1.8" ry="2.4" fill="#b8eef2"/><rect x="965.9" y="330.8" width="1.8" height="12" fill="#c89a20"/><rect x="967.7" y="332.8" width="1.4" height="5" fill="#c04a3a"/><ellipse cx="964.1" cy="329.8" rx="1.8" ry="2.4" fill="#b8eef2"/><ellipse cx="969.6" cy="329.8" rx="1.8" ry="2.4" fill="#b8eef2"/><rect x="1036.1" y="317.8" width="1.8" height="12" fill="#c89a20"/><rect x="1037.9" y="319.8" width="1.4" height="5" fill="#c04a3a"/><ellipse cx="1034.3" cy="316.8" rx="1.8" ry="2.4" fill="#b8eef2"/><ellipse cx="1039.8" cy="316.8" rx="1.8" ry="2.4" fill="#b8eef2"/><rect x="1071.0" y="311.4" width="1.8" height="12" fill="#c89a20"/><rect x="1072.8" y="313.4" width="1.4" height="5" fill="#c04a3a"/><ellipse cx="1072.2" cy="310.4" rx="1.8" ry="2.4" fill="#b8eef2"/><rect x="1105.9" y="304.9" width="1.8" height="12" fill="#c89a20"/><rect x="1107.7" y="306.9" width="1.4" height="5" fill="#c04a3a"/><ellipse cx="1104.1" cy="303.9" rx="1.8" ry="2.4" fill="#b8eef2"/><ellipse cx="1109.6" cy="303.9" rx="1.8" ry="2.4" fill="#b8eef2"/><rect x="1140.6" y="298.5" width="1.8" height="12" fill="#c89a20"/><rect x="1142.4" y="300.5" width="1.4" height="5" fill="#c04a3a"/><ellipse cx="1141.8" cy="297.5" rx="1.8" ry="2.4" fill="#b8eef2"/><rect x="1175.3" y="292.0" width="1.8" height="12" fill="#c89a20"/><rect x="1177.1" y="294.0" width="1.4" height="5" fill="#c04a3a"/><ellipse cx="1173.5" cy="291.0" rx="1.8" ry="2.4" fill="#b8eef2"/><ellipse cx="1179.0" cy="291.0" rx="1.8" ry="2.4" fill="#b8eef2"/><rect x="684.5" y="418.9" width="1.8" height="12" fill="#c89a20"/><rect x="686.3" y="420.9" width="1.4" height="5" fill="#c04a3a"/><ellipse cx="682.7" cy="417.9" rx="1.8" ry="2.4" fill="#b8eef2"/><ellipse cx="688.2" cy="417.9" rx="1.8" ry="2.4" fill="#b8eef2"/><rect x="720.8" y="412.1" width="1.8" height="12" fill="#c89a20"/><rect x="722.6" y="414.1" width="1.4" height="5" fill="#c04a3a"/><ellipse cx="722.0" cy="411.1" rx="1.8" ry="2.4" fill="#b8eef2"/><rect x="756.9" y="405.3" width="1.8" height="12" fill="#c89a20"/><rect x="758.7" y="407.3" width="1.4" height="5" fill="#c04a3a"/><ellipse cx="755.1" cy="404.3" rx="1.8" ry="2.4" fill="#b8eef2"/><ellipse cx="760.6" cy="404.3" rx="1.8" ry="2.4" fill="#b8eef2"/><rect x="793.0" y="398.6" width="1.8" height="12" fill="#c89a20"/><rect x="794.8" y="400.6" width="1.4" height="5" fill="#c04a3a"/><ellipse cx="794.2" cy="397.6" rx="1.8" ry="2.4" fill="#b8eef2"/><rect x="829.0" y="391.9" width="1.8" height="12" fill="#c89a20"/><rect x="830.8" y="393.9" width="1.4" height="5" fill="#c04a3a"/><ellipse cx="827.2" cy="390.9" rx="1.8" ry="2.4" fill="#b8eef2"/><ellipse cx="832.7" cy="390.9" rx="1.8" ry="2.4" fill="#b8eef2"/><rect x="900.6" y="378.5" width="1.8" height="12" fill="#c89a20"/><rect x="902.4" y="380.5" width="1.4" height="5" fill="#c04a3a"/><ellipse cx="898.8" cy="377.5" rx="1.8" ry="2.4" fill="#b8eef2"/><ellipse cx="904.3" cy="377.5" rx="1.8" ry="2.4" fill="#b8eef2"/><rect x="936.3" y="371.8" width="1.8" height="12" fill="#c89a20"/><rect x="938.1" y="373.8" width="1.4" height="5" fill="#c04a3a"/><ellipse cx="937.5" cy="370.8" rx="1.8" ry="2.4" fill="#b8eef2"/><rect x="971.9" y="365.2" width="1.8" height="12" fill="#c89a20"/><rect x="973.7" y="367.2" width="1.4" height="5" fill="#c04a3a"/><ellipse cx="970.1" cy="364.2" rx="1.8" ry="2.4" fill="#b8eef2"/><ellipse cx="975.6" cy="364.2" rx="1.8" ry="2.4" fill="#b8eef2"/><rect x="1007.3" y="358.6" width="1.8" height="12" fill="#c89a20"/><rect x="1009.1" y="360.6" width="1.4" height="5" fill="#c04a3a"/><ellipse cx="1008.5" cy="357.6" rx="1.8" ry="2.4" fill="#b8eef2"/><rect x="1042.6" y="352.0" width="1.8" height="12" fill="#c89a20"/><rect x="1044.4" y="354.0" width="1.4" height="5" fill="#c04a3a"/><ellipse cx="1040.8" cy="351.0" rx="1.8" ry="2.4" fill="#b8eef2"/><ellipse cx="1046.3" cy="351.0" rx="1.8" ry="2.4" fill="#b8eef2"/><rect x="1113.0" y="338.8" width="1.8" height="12" fill="#c89a20"/><rect x="1114.8" y="340.8" width="1.4" height="5" fill="#c04a3a"/><ellipse cx="1111.2" cy="337.8" rx="1.8" ry="2.4" fill="#b8eef2"/><ellipse cx="1116.7" cy="337.8" rx="1.8" ry="2.4" fill="#b8eef2"/><rect x="1148.0" y="332.3" width="1.8" height="12" fill="#c89a20"/><rect x="1149.8" y="334.3" width="1.4" height="5" fill="#c04a3a"/><ellipse cx="1149.2" cy="331.3" rx="1.8" ry="2.4" fill="#b8eef2"/><rect x="1183.0" y="325.7" width="1.8" height="12" fill="#c89a20"/><rect x="1184.8" y="327.7" width="1.4" height="5" fill="#c04a3a"/><ellipse cx="1181.2" cy="324.7" rx="1.8" ry="2.4" fill="#b8eef2"/><ellipse cx="1186.7" cy="324.7" rx="1.8" ry="2.4" fill="#b8eef2"/><rect x="761.2" y="440.9" width="1.8" height="12" fill="#c89a20"/><rect x="763.0" y="442.9" width="1.4" height="5" fill="#c04a3a"/><ellipse cx="759.4" cy="439.9" rx="1.8" ry="2.4" fill="#b8eef2"/><ellipse cx="764.9" cy="439.9" rx="1.8" ry="2.4" fill="#b8eef2"/><rect x="797.6" y="434.1" width="1.8" height="12" fill="#c89a20"/><rect x="799.4" y="436.1" width="1.4" height="5" fill="#c04a3a"/><ellipse cx="798.8" cy="433.1" rx="1.8" ry="2.4" fill="#b8eef2"/><rect x="833.9" y="427.3" width="1.8" height="12" fill="#c89a20"/><rect x="835.7" y="429.3" width="1.4" height="5" fill="#c04a3a"/><ellipse cx="832.1" cy="426.3" rx="1.8" ry="2.4" fill="#b8eef2"/><ellipse cx="837.6" cy="426.3" rx="1.8" ry="2.4" fill="#b8eef2"/><rect x="870.0" y="420.4" width="1.8" height="12" fill="#c89a20"/><rect x="871.8" y="422.4" width="1.4" height="5" fill="#c04a3a"/><ellipse cx="871.2" cy="419.4" rx="1.8" ry="2.4" fill="#b8eef2"/><rect x="906.1" y="413.6" width="1.8" height="12" fill="#c89a20"/><rect x="907.9" y="415.6" width="1.4" height="5" fill="#c04a3a"/><ellipse cx="904.3" cy="412.6" rx="1.8" ry="2.4" fill="#b8eef2"/><ellipse cx="909.8" cy="412.6" rx="1.8" ry="2.4" fill="#b8eef2"/><rect x="977.9" y="400.1" width="1.8" height="12" fill="#c89a20"/><rect x="979.7" y="402.1" width="1.4" height="5" fill="#c04a3a"/><ellipse cx="976.1" cy="399.1" rx="1.8" ry="2.4" fill="#b8eef2"/><ellipse cx="981.6" cy="399.1" rx="1.8" ry="2.4" fill="#b8eef2"/><rect x="1013.7" y="393.4" width="1.8" height="12" fill="#c89a20"/><rect x="1015.5" y="395.4" width="1.4" height="5" fill="#c04a3a"/><ellipse cx="1014.9" cy="392.4" rx="1.8" ry="2.4" fill="#b8eef2"/><rect x="1049.3" y="386.7" width="1.8" height="12" fill="#c89a20"/><rect x="1051.1" y="388.7" width="1.4" height="5" fill="#c04a3a"/><ellipse cx="1047.5" cy="385.7" rx="1.8" ry="2.4" fill="#b8eef2"/><ellipse cx="1053.0" cy="385.7" rx="1.8" ry="2.4" fill="#b8eef2"/><rect x="1084.8" y="380.0" width="1.8" height="12" fill="#c89a20"/><rect x="1086.6" y="382.0" width="1.4" height="5" fill="#c04a3a"/><ellipse cx="1086.0" cy="379.0" rx="1.8" ry="2.4" fill="#b8eef2"/><rect x="1120.3" y="373.3" width="1.8" height="12" fill="#c89a20"/><rect x="1122.1" y="375.3" width="1.4" height="5" fill="#c04a3a"/><ellipse cx="1118.5" cy="372.3" rx="1.8" ry="2.4" fill="#b8eef2"/><ellipse cx="1124.0" cy="372.3" rx="1.8" ry="2.4" fill="#b8eef2"/><rect x="1190.8" y="360.0" width="1.8" height="12" fill="#c89a20"/><rect x="1192.6" y="362.0" width="1.4" height="5" fill="#c04a3a"/><ellipse cx="1189.0" cy="359.0" rx="1.8" ry="2.4" fill="#b8eef2"/><ellipse cx="1194.5" cy="359.0" rx="1.8" ry="2.4" fill="#b8eef2"/><rect x="838.8" y="463.3" width="1.8" height="12" fill="#c89a20"/><rect x="840.6" y="465.3" width="1.4" height="5" fill="#c04a3a"/><ellipse cx="837.0" cy="462.3" rx="1.8" ry="2.4" fill="#b8eef2"/><ellipse cx="842.5" cy="462.3" rx="1.8" ry="2.4" fill="#b8eef2"/><rect x="875.3" y="456.3" width="1.8" height="12" fill="#c89a20"/><rect x="877.1" y="458.3" width="1.4" height="5" fill="#c04a3a"/><ellipse cx="876.5" cy="455.3" rx="1.8" ry="2.4" fill="#b8eef2"/><rect x="911.7" y="449.4" width="1.8" height="12" fill="#c89a20"/><rect x="913.5" y="451.4" width="1.4" height="5" fill="#c04a3a"/><ellipse cx="909.9" cy="448.4" rx="1.8" ry="2.4" fill="#b8eef2"/><ellipse cx="915.4" cy="448.4" rx="1.8" ry="2.4" fill="#b8eef2"/><rect x="947.9" y="442.5" width="1.8" height="12" fill="#c89a20"/><rect x="949.7" y="444.5" width="1.4" height="5" fill="#c04a3a"/><ellipse cx="949.1" cy="441.5" rx="1.8" ry="2.4" fill="#b8eef2"/><rect x="984.1" y="435.7" width="1.8" height="12" fill="#c89a20"/><rect x="985.9" y="437.7" width="1.4" height="5" fill="#c04a3a"/><ellipse cx="982.3" cy="434.7" rx="1.8" ry="2.4" fill="#b8eef2"/><ellipse cx="987.8" cy="434.7" rx="1.8" ry="2.4" fill="#b8eef2"/><rect x="1056.1" y="422.0" width="1.8" height="12" fill="#c89a20"/><rect x="1057.9" y="424.0" width="1.4" height="5" fill="#c04a3a"/><ellipse cx="1054.3" cy="421.0" rx="1.8" ry="2.4" fill="#b8eef2"/><ellipse cx="1059.8" cy="421.0" rx="1.8" ry="2.4" fill="#b8eef2"/><rect x="1091.9" y="415.2" width="1.8" height="12" fill="#c89a20"/><rect x="1093.7" y="417.2" width="1.4" height="5" fill="#c04a3a"/><ellipse cx="1093.1" cy="414.2" rx="1.8" ry="2.4" fill="#b8eef2"/><rect x="1127.6" y="408.4" width="1.8" height="12" fill="#c89a20"/><rect x="1129.4" y="410.4" width="1.4" height="5" fill="#c04a3a"/><ellipse cx="1125.8" cy="407.4" rx="1.8" ry="2.4" fill="#b8eef2"/><ellipse cx="1131.3" cy="407.4" rx="1.8" ry="2.4" fill="#b8eef2"/><rect x="1163.3" y="401.6" width="1.8" height="12" fill="#c89a20"/><rect x="1165.1" y="403.6" width="1.4" height="5" fill="#c04a3a"/><ellipse cx="1164.5" cy="400.6" rx="1.8" ry="2.4" fill="#b8eef2"/><rect x="917.3" y="485.8" width="1.8" height="12" fill="#c89a20"/><rect x="919.1" y="487.8" width="1.4" height="5" fill="#c04a3a"/><ellipse cx="915.5" cy="484.8" rx="1.8" ry="2.4" fill="#b8eef2"/><ellipse cx="921.0" cy="484.8" rx="1.8" ry="2.4" fill="#b8eef2"/><rect x="953.9" y="478.8" width="1.8" height="12" fill="#c89a20"/><rect x="955.7" y="480.8" width="1.4" height="5" fill="#c04a3a"/><ellipse cx="955.1" cy="477.8" rx="1.8" ry="2.4" fill="#b8eef2"/><rect x="990.4" y="471.9" width="1.8" height="12" fill="#c89a20"/><rect x="992.2" y="473.9" width="1.4" height="5" fill="#c04a3a"/><ellipse cx="988.6" cy="470.9" rx="1.8" ry="2.4" fill="#b8eef2"/><ellipse cx="994.1" cy="470.9" rx="1.8" ry="2.4" fill="#b8eef2"/><rect x="1026.7" y="464.9" width="1.8" height="12" fill="#c89a20"/><rect x="1028.5" y="466.9" width="1.4" height="5" fill="#c04a3a"/><ellipse cx="1027.9" cy="463.9" rx="1.8" ry="2.4" fill="#b8eef2"/><rect x="1063.0" y="457.9" width="1.8" height="12" fill="#c89a20"/><rect x="1064.8" y="459.9" width="1.4" height="5" fill="#c04a3a"/><ellipse cx="1061.2" cy="456.9" rx="1.8" ry="2.4" fill="#b8eef2"/><ellipse cx="1066.7" cy="456.9" rx="1.8" ry="2.4" fill="#b8eef2"/><rect x="1135.1" y="444.1" width="1.8" height="12" fill="#c89a20"/><rect x="1136.9" y="446.1" width="1.4" height="5" fill="#c04a3a"/><ellipse cx="1133.3" cy="443.1" rx="1.8" ry="2.4" fill="#b8eef2"/><ellipse cx="1138.8" cy="443.1" rx="1.8" ry="2.4" fill="#b8eef2"/><rect x="1171.1" y="437.3" width="1.8" height="12" fill="#c89a20"/><rect x="1172.9" y="439.3" width="1.4" height="5" fill="#c04a3a"/><ellipse cx="1172.3" cy="436.3" rx="1.8" ry="2.4" fill="#b8eef2"/><rect x="996.8" y="508.7" width="1.8" height="12" fill="#c89a20"/><rect x="998.6" y="510.7" width="1.4" height="5" fill="#c04a3a"/><ellipse cx="995.0" cy="507.7" rx="1.8" ry="2.4" fill="#b8eef2"/><ellipse cx="1000.5" cy="507.7" rx="1.8" ry="2.4" fill="#b8eef2"/><rect x="1033.4" y="501.6" width="1.8" height="12" fill="#c89a20"/><rect x="1035.2" y="503.6" width="1.4" height="5" fill="#c04a3a"/><ellipse cx="1034.6" cy="500.6" rx="1.8" ry="2.4" fill="#b8eef2"/><rect x="1070.0" y="494.5" width="1.8" height="12" fill="#c89a20"/><rect x="1071.8" y="496.5" width="1.4" height="5" fill="#c04a3a"/><ellipse cx="1068.2" cy="493.5" rx="1.8" ry="2.4" fill="#b8eef2"/><ellipse cx="1073.7" cy="493.5" rx="1.8" ry="2.4" fill="#b8eef2"/><rect x="1106.4" y="487.5" width="1.8" height="12" fill="#c89a20"/><rect x="1108.2" y="489.5" width="1.4" height="5" fill="#c04a3a"/><ellipse cx="1107.6" cy="486.5" rx="1.8" ry="2.4" fill="#b8eef2"/><rect x="1142.8" y="480.5" width="1.8" height="12" fill="#c89a20"/><rect x="1144.6" y="482.5" width="1.4" height="5" fill="#c04a3a"/><ellipse cx="1141.0" cy="479.5" rx="1.8" ry="2.4" fill="#b8eef2"/><ellipse cx="1146.5" cy="479.5" rx="1.8" ry="2.4" fill="#b8eef2"/><rect x="1077.1" y="531.8" width="1.8" height="12" fill="#c89a20"/><rect x="1078.9" y="533.8" width="1.4" height="5" fill="#c04a3a"/><ellipse cx="1075.3" cy="530.8" rx="1.8" ry="2.4" fill="#b8eef2"/><ellipse cx="1080.8" cy="530.8" rx="1.8" ry="2.4" fill="#b8eef2"/><rect x="1113.9" y="524.6" width="1.8" height="12" fill="#c89a20"/><rect x="1115.7" y="526.6" width="1.4" height="5" fill="#c04a3a"/><ellipse cx="1115.1" cy="523.6" rx="1.8" ry="2.4" fill="#b8eef2"/><rect x="1150.6" y="517.5" width="1.8" height="12" fill="#c89a20"/><rect x="1152.4" y="519.5" width="1.4" height="5" fill="#c04a3a"/><ellipse cx="1148.8" cy="516.5" rx="1.8" ry="2.4" fill="#b8eef2"/><ellipse cx="1154.3" cy="516.5" rx="1.8" ry="2.4" fill="#b8eef2"/><rect x="1187.1" y="510.4" width="1.8" height="12" fill="#c89a20"/><rect x="1188.9" y="512.4" width="1.4" height="5" fill="#c04a3a"/><ellipse cx="1188.3" cy="509.4" rx="1.8" ry="2.4" fill="#b8eef2"/><rect x="1158.5" y="555.2" width="1.8" height="12" fill="#c89a20"/><rect x="1160.3" y="557.2" width="1.4" height="5" fill="#c04a3a"/><ellipse cx="1156.7" cy="554.2" rx="1.8" ry="2.4" fill="#b8eef2"/><ellipse cx="1162.2" cy="554.2" rx="1.8" ry="2.4" fill="#b8eef2"/><rect x="533.6" y="375.5" width="1.8" height="12" fill="#c89a20"/><rect x="535.4" y="377.5" width="1.4" height="5" fill="#c04a3a"/><ellipse cx="531.8" cy="374.5" rx="1.8" ry="2.4" fill="#b8eef2"/><ellipse cx="537.3" cy="374.5" rx="1.8" ry="2.4" fill="#b8eef2"/><rect x="569.7" y="368.9" width="1.8" height="12" fill="#c89a20"/><rect x="571.5" y="370.9" width="1.4" height="5" fill="#c04a3a"/><ellipse cx="570.9" cy="367.9" rx="1.8" ry="2.4" fill="#b8eef2"/><rect x="641.6" y="355.6" width="1.8" height="12" fill="#c89a20"/><rect x="643.4" y="357.6" width="1.4" height="5" fill="#c04a3a"/><ellipse cx="642.8" cy="354.6" rx="1.8" ry="2.4" fill="#b8eef2"/><rect x="677.4" y="349.1" width="1.8" height="12" fill="#c89a20"/><rect x="679.2" y="351.1" width="1.4" height="5" fill="#c04a3a"/><ellipse cx="675.6" cy="348.1" rx="1.8" ry="2.4" fill="#b8eef2"/><ellipse cx="681.1" cy="348.1" rx="1.8" ry="2.4" fill="#b8eef2"/><rect x="748.7" y="336.0" width="1.8" height="12" fill="#c89a20"/><rect x="750.5" y="338.0" width="1.4" height="5" fill="#c04a3a"/><ellipse cx="746.9" cy="335.0" rx="1.8" ry="2.4" fill="#b8eef2"/><ellipse cx="752.4" cy="335.0" rx="1.8" ry="2.4" fill="#b8eef2"/><rect x="784.2" y="329.4" width="1.8" height="12" fill="#c89a20"/><rect x="786.0" y="331.4" width="1.4" height="5" fill="#c04a3a"/><ellipse cx="785.4" cy="328.4" rx="1.8" ry="2.4" fill="#b8eef2"/><rect x="854.8" y="316.4" width="1.8" height="12" fill="#c89a20"/><rect x="856.6" y="318.4" width="1.4" height="5" fill="#c04a3a"/><ellipse cx="856.0" cy="315.4" rx="1.8" ry="2.4" fill="#b8eef2"/><rect x="890.0" y="310.0" width="1.8" height="12" fill="#c89a20"/><rect x="891.8" y="312.0" width="1.4" height="5" fill="#c04a3a"/><ellipse cx="888.2" cy="309.0" rx="1.8" ry="2.4" fill="#b8eef2"/><ellipse cx="893.7" cy="309.0" rx="1.8" ry="2.4" fill="#b8eef2"/><polygon points="505.0,381.0 1120.0,551.0 1120.0,564.0 505.0,393.0" fill="#2e9660" /><polygon points="1125.0,543.0 1191.0,531.0 1191.0,545.0 1130.0,553.0" fill="#000" /><polygon points="1118.0,538.0 1191.0,526.0 1191.0,531.0 1125.0,543.0" fill="#2fa062" /><polygon points="1120.0,552.0 1191.0,543.0 1191.0,554.0 1120.0,565.0" fill="#2e9660" /><rect x="1184.0" y="522.0" width="10" height="158.0" fill="#ad50e6"/><rect x="1184.0" y="522.0" width="4.0" height="158.0" fill="#9b46cf"/><line x1="1183.0" y1="680.0" x2="1183.0" y2="692.0" stroke="#56626c" stroke-width="0.9" /><line x1="1186.0" y1="680.0" x2="1186.0" y2="692.0" stroke="#56626c" stroke-width="0.9" /><line x1="1189.0" y1="680.0" x2="1189.0" y2="692.0" stroke="#56626c" stroke-width="0.9" /><line x1="1192.0" y1="680.0" x2="1192.0" y2="692.0" stroke="#56626c" stroke-width="0.9" /><line x1="1195.0" y1="680.0" x2="1195.0" y2="692.0" stroke="#56626c" stroke-width="0.9" /><rect x="1182.0" y="678.5" width="14" height="3" fill="#1f8f70"/><rect x="1188.3" y="520.0" width="1.8" height="12" fill="#c89a20"/><rect x="1190.1" y="522.0" width="1.4" height="5" fill="#c04a3a"/><ellipse cx="1186.5" cy="519.0" rx="1.8" ry="2.4" fill="#b8eef2"/><ellipse cx="1192.0" cy="519.0" rx="1.8" ry="2.4" fill="#b8eef2"/><rect x="501.0" y="379.0" width="10" height="158.0" fill="#ad50e6"/><rect x="501.0" y="379.0" width="4.0" height="158.0" fill="#9b46cf"/><line x1="500.0" y1="537.0" x2="500.0" y2="549.0" stroke="#56626c" stroke-width="0.9" /><line x1="503.0" y1="537.0" x2="503.0" y2="549.0" stroke="#56626c" stroke-width="0.9" /><line x1="506.0" y1="537.0" x2="506.0" y2="549.0" stroke="#56626c" stroke-width="0.9" /><line x1="509.0" y1="537.0" x2="509.0" y2="549.0" stroke="#56626c" stroke-width="0.9" /><line x1="512.0" y1="537.0" x2="512.0" y2="549.0" stroke="#56626c" stroke-width="0.9" /><rect x="499.0" y="535.5" width="14" height="3" fill="#1f8f70"/><rect x="505.3" y="377.0" width="1.8" height="12" fill="#c89a20"/><rect x="507.1" y="379.0" width="1.4" height="5" fill="#c04a3a"/><ellipse cx="503.5" cy="376.0" rx="1.8" ry="2.4" fill="#b8eef2"/><ellipse cx="509.0" cy="376.0" rx="1.8" ry="2.4" fill="#b8eef2"/><rect x="574.5" y="399.0" width="10" height="158.0" fill="#ad50e6"/><rect x="574.5" y="399.0" width="4.0" height="158.0" fill="#9b46cf"/><line x1="573.5" y1="557.0" x2="573.5" y2="569.0" stroke="#56626c" stroke-width="0.9" /><line x1="576.5" y1="557.0" x2="576.5" y2="569.0" stroke="#56626c" stroke-width="0.9" /><line x1="579.5" y1="557.0" x2="579.5" y2="569.0" stroke="#56626c" stroke-width="0.9" /><line x1="582.5" y1="557.0" x2="582.5" y2="569.0" stroke="#56626c" stroke-width="0.9" /><line x1="585.5" y1="557.0" x2="585.5" y2="569.0" stroke="#56626c" stroke-width="0.9" /><rect x="572.5" y="555.5" width="14" height="3" fill="#1f8f70"/><rect x="578.8" y="397.0" width="1.8" height="12" fill="#c89a20"/><rect x="580.6" y="399.0" width="1.4" height="5" fill="#c04a3a"/><ellipse cx="577.0" cy="396.0" rx="1.8" ry="2.4" fill="#b8eef2"/><ellipse cx="582.5" cy="396.0" rx="1.8" ry="2.4" fill="#b8eef2"/><rect x="653.0" y="421.0" width="10" height="158.0" fill="#ad50e6"/><rect x="653.0" y="421.0" width="4.0" height="158.0" fill="#9b46cf"/><line x1="652.0" y1="579.0" x2="652.0" y2="591.0" stroke="#56626c" stroke-width="0.9" /><line x1="655.0" y1="579.0" x2="655.0" y2="591.0" stroke="#56626c" stroke-width="0.9" /><line x1="658.0" y1="579.0" x2="658.0" y2="591.0" stroke="#56626c" stroke-width="0.9" /><line x1="661.0" y1="579.0" x2="661.0" y2="591.0" stroke="#56626c" stroke-width="0.9" /><line x1="664.0" y1="579.0" x2="664.0" y2="591.0" stroke="#56626c" stroke-width="0.9" /><rect x="651.0" y="577.5" width="14" height="3" fill="#1f8f70"/><rect x="657.3" y="419.0" width="1.8" height="12" fill="#c89a20"/><rect x="659.1" y="421.0" width="1.4" height="5" fill="#c04a3a"/><ellipse cx="655.5" cy="418.0" rx="1.8" ry="2.4" fill="#b8eef2"/><ellipse cx="661.0" cy="418.0" rx="1.8" ry="2.4" fill="#b8eef2"/><rect x="810.0" y="466.0" width="10" height="158.0" fill="#ad50e6"/><rect x="810.0" y="466.0" width="4.0" height="158.0" fill="#9b46cf"/><line x1="809.0" y1="624.0" x2="809.0" y2="636.0" stroke="#56626c" stroke-width="0.9" /><line x1="812.0" y1="624.0" x2="812.0" y2="636.0" stroke="#56626c" stroke-width="0.9" /><line x1="815.0" y1="624.0" x2="815.0" y2="636.0" stroke="#56626c" stroke-width="0.9" /><line x1="818.0" y1="624.0" x2="818.0" y2="636.0" stroke="#56626c" stroke-width="0.9" /><line x1="821.0" y1="624.0" x2="821.0" y2="636.0" stroke="#56626c" stroke-width="0.9" /><rect x="808.0" y="622.5" width="14" height="3" fill="#1f8f70"/><rect x="814.3" y="464.0" width="1.8" height="12" fill="#c89a20"/><rect x="816.1" y="466.0" width="1.4" height="5" fill="#c04a3a"/><ellipse cx="812.5" cy="463.0" rx="1.8" ry="2.4" fill="#b8eef2"/><ellipse cx="818.0" cy="463.0" rx="1.8" ry="2.4" fill="#b8eef2"/><rect x="888.3" y="488.4" width="10" height="158.0" fill="#ad50e6"/><rect x="888.3" y="488.4" width="4.0" height="158.0" fill="#9b46cf"/><line x1="887.3" y1="646.4" x2="887.3" y2="658.4" stroke="#56626c" stroke-width="0.9" /><line x1="890.3" y1="646.4" x2="890.3" y2="658.4" stroke="#56626c" stroke-width="0.9" /><line x1="893.3" y1="646.4" x2="893.3" y2="658.4" stroke="#56626c" stroke-width="0.9" /><line x1="896.3" y1="646.4" x2="896.3" y2="658.4" stroke="#56626c" stroke-width="0.9" /><line x1="899.3" y1="646.4" x2="899.3" y2="658.4" stroke="#56626c" stroke-width="0.9" /><rect x="886.3" y="644.9" width="14" height="3" fill="#1f8f70"/><rect x="892.6" y="486.4" width="1.8" height="12" fill="#c89a20"/><rect x="894.4" y="488.4" width="1.4" height="5" fill="#c04a3a"/><ellipse cx="890.8" cy="485.4" rx="1.8" ry="2.4" fill="#b8eef2"/><ellipse cx="896.3" cy="485.4" rx="1.8" ry="2.4" fill="#b8eef2"/><rect x="966.5" y="510.0" width="10" height="158.0" fill="#ad50e6"/><rect x="966.5" y="510.0" width="4.0" height="158.0" fill="#9b46cf"/><line x1="965.5" y1="668.0" x2="965.5" y2="680.0" stroke="#56626c" stroke-width="0.9" /><line x1="968.5" y1="668.0" x2="968.5" y2="680.0" stroke="#56626c" stroke-width="0.9" /><line x1="971.5" y1="668.0" x2="971.5" y2="680.0" stroke="#56626c" stroke-width="0.9" /><line x1="974.5" y1="668.0" x2="974.5" y2="680.0" stroke="#56626c" stroke-width="0.9" /><line x1="977.5" y1="668.0" x2="977.5" y2="680.0" stroke="#56626c" stroke-width="0.9" /><rect x="964.5" y="666.5" width="14" height="3" fill="#1f8f70"/><rect x="970.8" y="508.0" width="1.8" height="12" fill="#c89a20"/><rect x="972.6" y="510.0" width="1.4" height="5" fill="#c04a3a"/><ellipse cx="969.0" cy="507.0" rx="1.8" ry="2.4" fill="#b8eef2"/><ellipse cx="974.5" cy="507.0" rx="1.8" ry="2.4" fill="#b8eef2"/><rect x="1044.7" y="533.0" width="10" height="158.0" fill="#ad50e6"/><rect x="1044.7" y="533.0" width="4.0" height="158.0" fill="#9b46cf"/><line x1="1043.7" y1="691.0" x2="1043.7" y2="703.0" stroke="#56626c" stroke-width="0.9" /><line x1="1046.7" y1="691.0" x2="1046.7" y2="703.0" stroke="#56626c" stroke-width="0.9" /><line x1="1049.7" y1="691.0" x2="1049.7" y2="703.0" stroke="#56626c" stroke-width="0.9" /><line x1="1052.7" y1="691.0" x2="1052.7" y2="703.0" stroke="#56626c" stroke-width="0.9" /><line x1="1055.7" y1="691.0" x2="1055.7" y2="703.0" stroke="#56626c" stroke-width="0.9" /><rect x="1042.7" y="689.5" width="14" height="3" fill="#1f8f70"/><rect x="1049.0" y="531.0" width="1.8" height="12" fill="#c89a20"/><rect x="1050.8" y="533.0" width="1.4" height="5" fill="#c04a3a"/><ellipse cx="1047.2" cy="530.0" rx="1.8" ry="2.4" fill="#b8eef2"/><ellipse cx="1052.7" cy="530.0" rx="1.8" ry="2.4" fill="#b8eef2"/><rect x="1081.0" y="543.0" width="10" height="158.0" fill="#ad50e6"/><rect x="1081.0" y="543.0" width="4.0" height="158.0" fill="#9b46cf"/><line x1="1080.0" y1="701.0" x2="1080.0" y2="713.0" stroke="#56626c" stroke-width="0.9" /><line x1="1083.0" y1="701.0" x2="1083.0" y2="713.0" stroke="#56626c" stroke-width="0.9" /><line x1="1086.0" y1="701.0" x2="1086.0" y2="713.0" stroke="#56626c" stroke-width="0.9" /><line x1="1089.0" y1="701.0" x2="1089.0" y2="713.0" stroke="#56626c" stroke-width="0.9" /><line x1="1092.0" y1="701.0" x2="1092.0" y2="713.0" stroke="#56626c" stroke-width="0.9" /><rect x="1079.0" y="699.5" width="14" height="3" fill="#1f8f70"/><rect x="1085.3" y="541.0" width="1.8" height="12" fill="#c89a20"/><rect x="1087.1" y="543.0" width="1.4" height="5" fill="#c04a3a"/><ellipse cx="1083.5" cy="540.0" rx="1.8" ry="2.4" fill="#b8eef2"/><ellipse cx="1089.0" cy="540.0" rx="1.8" ry="2.4" fill="#b8eef2"/><rect x="1118.0" y="552.7" width="10" height="158.0" fill="#ad50e6"/><rect x="1118.0" y="552.7" width="4.0" height="158.0" fill="#9b46cf"/><line x1="1117.0" y1="710.7" x2="1117.0" y2="722.7" stroke="#56626c" stroke-width="0.9" /><line x1="1120.0" y1="710.7" x2="1120.0" y2="722.7" stroke="#56626c" stroke-width="0.9" /><line x1="1123.0" y1="710.7" x2="1123.0" y2="722.7" stroke="#56626c" stroke-width="0.9" /><line x1="1126.0" y1="710.7" x2="1126.0" y2="722.7" stroke="#56626c" stroke-width="0.9" /><line x1="1129.0" y1="710.7" x2="1129.0" y2="722.7" stroke="#56626c" stroke-width="0.9" /><rect x="1116.0" y="709.2" width="14" height="3" fill="#1f8f70"/><rect x="1122.3" y="550.7" width="1.8" height="12" fill="#c89a20"/><rect x="1124.1" y="552.7" width="1.4" height="5" fill="#c04a3a"/><ellipse cx="1120.5" cy="549.7" rx="1.8" ry="2.4" fill="#b8eef2"/><ellipse cx="1126.0" cy="549.7" rx="1.8" ry="2.4" fill="#b8eef2"/><rect x="731.4" y="443.8" width="10" height="158" fill="#1d55dc"/><rect x="730.4" y="438.8" width="12" height="12" fill="#00ff00"/><rect x="730.4" y="595.8" width="12" height="12" fill="#00ff00"/><text x="762.0" y="636.0" fill="#fff" font-size="17" text-anchor="middle" dominant-baseline="central" font-family="Liberation Sans, sans-serif" transform="rotate(22 762.0 636.0)">60000</text><rect x="516" y="769" width="4" height="13" fill="#0000ff"/><polygon points="513,768.5 523.5,768.5 518,757.5" fill="#0000ff"/><text x="518.0" y="751.0" fill="#0000ff" font-size="15" text-anchor="middle" dominant-baseline="central" font-family="Liberation Sans, sans-serif">Z</text><polygon points="523,782 536,781 536,786 523,788" fill="#ff0000"/><ellipse cx="532" cy="783.5" rx="3.5" ry="4.5" fill="#ff0000"/><polygon points="535,779 542,783 535,788" fill="#c00000"/><text x="546.0" y="781.0" fill="#ff0000" font-size="15" text-anchor="middle" dominant-baseline="central" font-family="Liberation Sans, sans-serif">X</text><polygon points="513,782 502,780 502,786 513,788" fill="#00d000"/><ellipse cx="506" cy="783.5" rx="4" ry="4.5" fill="#00ee00"/><polygon points="499,781 503,778 503,786" fill="#00a000"/><text x="495.0" y="778.5" fill="#00ff00" font-size="15" text-anchor="middle" dominant-baseline="central" font-family="Liberation Sans, sans-serif">Y</text><rect x="513" y="782" width="10" height="8" fill="#c4c4c4"/><polygon points="468,395 481,399 484,402 484,450 481,453 468,457" fill="#535353"/><path d="M478 422L474 426.5L478 431" fill="none" stroke="#a8a8a8" stroke-width="1.1"/></svg>
<div style="left:0px;top:836px;width:1191px;height:31px;background:#fafafa"></div>
<div style="left:0px;top:866px;width:1191px;height:1px;background:#e8e8e8"></div>
<span class="t" style="left:2px;top:844px;color:#333">层高：&nbsp;9.8</span>
<span class="t" style="left:92px;top:844px;color:#333">标高：&nbsp;0.2~10</span>
<span class="t" style="left:232px;top:844px;color:#333">选中图元：1(26)</span>
<span class="t" style="left:342px;top:844px;color:#333">隐藏图元：0</span>
<div style="left:452px;top:839px;width:25px;height:25px;background:#fff;border:1px solid #8c8c8c;border-radius:3px"></div>
<div style="left:480px;top:839px;width:36px;height:25px;background:#dbe7f8;border:1px solid #2f7be8;border-radius:3px"></div>
<div style="left:519px;top:839px;width:36px;height:25px;background:#dbe7f8;border:1px solid #2f7be8;border-radius:3px"></div>
<div style="left:558px;top:839px;width:25px;height:25px;background:#fff;border:1px solid #c8c8c8;border-radius:3px"></div>
<div style="left:589px;top:839px;width:36px;height:25px;background:#fff;border:1px solid #8c8c8c;border-radius:3px"></div>
<div style="left:628px;top:839px;width:36px;height:25px;background:#fff;border:1px solid #8c8c8c;border-radius:3px"></div>
<div style="left:667px;top:839px;width:25px;height:25px;background:#fff;border:1px solid #8c8c8c;border-radius:3px"></div>
<div style="left:695px;top:839px;width:25px;height:25px;background:#fff;border:1px solid #8c8c8c;border-radius:3px"></div>
<svg style="left:452px;top:839px" width="270" height="25"><path d="M5.5 6V17.5H18M5.5 13.5H9.5V17.5" fill="none" stroke="#4b5162" stroke-width="1.1"/><rect x="33.5" y="5.5" width="13.5" height="13" rx="3" fill="none" stroke="#4b5162" stroke-width="1.1"/><circle cx="34" cy="6" r="1.6" fill="#fff" stroke="#2f7be8" stroke-width="1.1"/><path d="M54.7 10.3L60.1 10.3L57.4 13.6Z" fill="#4b5162"/><path d="M73.5 8.5L80 5L86.5 8.5V15.5L80 19L73.5 15.5ZM73.5 8.5L80 12L86.5 8.5M80 12V19" fill="none" stroke="#4b5162" stroke-width="1.1"/><circle cx="74" cy="8" r="1.6" fill="#fff" stroke="#2f7be8" stroke-width="1.1"/><path d="M93.9 10.3L99.3 10.3L96.6 13.6Z" fill="#4b5162"/><path d="M111 5L124 19M124 5L111 19" stroke="#c2c2c2" stroke-width="1"/><path d="M141 18H152M141 18L151 9" stroke="#4b5162" stroke-width="1.1" fill="none"/><circle cx="145.5" cy="14" r="1" fill="#fff" stroke="#4b5162" stroke-width="0.8"/><path d="M163.8 10.3L169.2 10.3L166.5 13.6Z" fill="#4b5162"/><path d="M183 5V10M180.5 7.5H185.5" stroke="#4b5162" stroke-width="1.1"/><rect x="184" y="11" width="8" height="4" fill="#4b5162"/><path d="M202.7 10.3L208.1 10.3L205.4 13.6Z" fill="#4b5162"/><rect x="223.5" y="6.5" width="10" height="10" rx="1" fill="none" stroke="#4b5162" stroke-width="1.2"/><rect x="220" y="4" width="11" height="10" rx="1" fill="#4b5162"/><rect x="222" y="6" width="7" height="6" fill="#fff"/><path d="M229 14L234 19.5L230.5 19.5Z" fill="#4b5162"/><path d="M249 19L252 9L262 5" fill="none" stroke="#4b5162" stroke-width="1"/><circle cx="249" cy="19" r="1" fill="#fff" stroke="#4b5162" stroke-width="0.8"/><circle cx="252" cy="9" r="1" fill="#fff" stroke="#4b5162" stroke-width="0.8"/><circle cx="262" cy="5" r="1" fill="#fff" stroke="#4b5162" stroke-width="0.8"/><path d="M260 13L265 16L260 18Z" fill="#4b5162"/></svg>
<svg style="left:735px;top:842px" width="18" height="18"><path d="M2 16L16 2M10 2H16V8M2 10V16H8" fill="none" stroke="#333" stroke-width="1.1"/></svg>
<span class="t" style="left:755px;top:844px;color:#333">按鼠标左键指定第一个角点，或拾取构件图元</span>
<div style="left:0px;top:382px;width:212px;height:326px;border:2px solid #ec4436;border-bottom-width:3px;border-right-width:3px;border-radius:3px"></div>
</body></html>
